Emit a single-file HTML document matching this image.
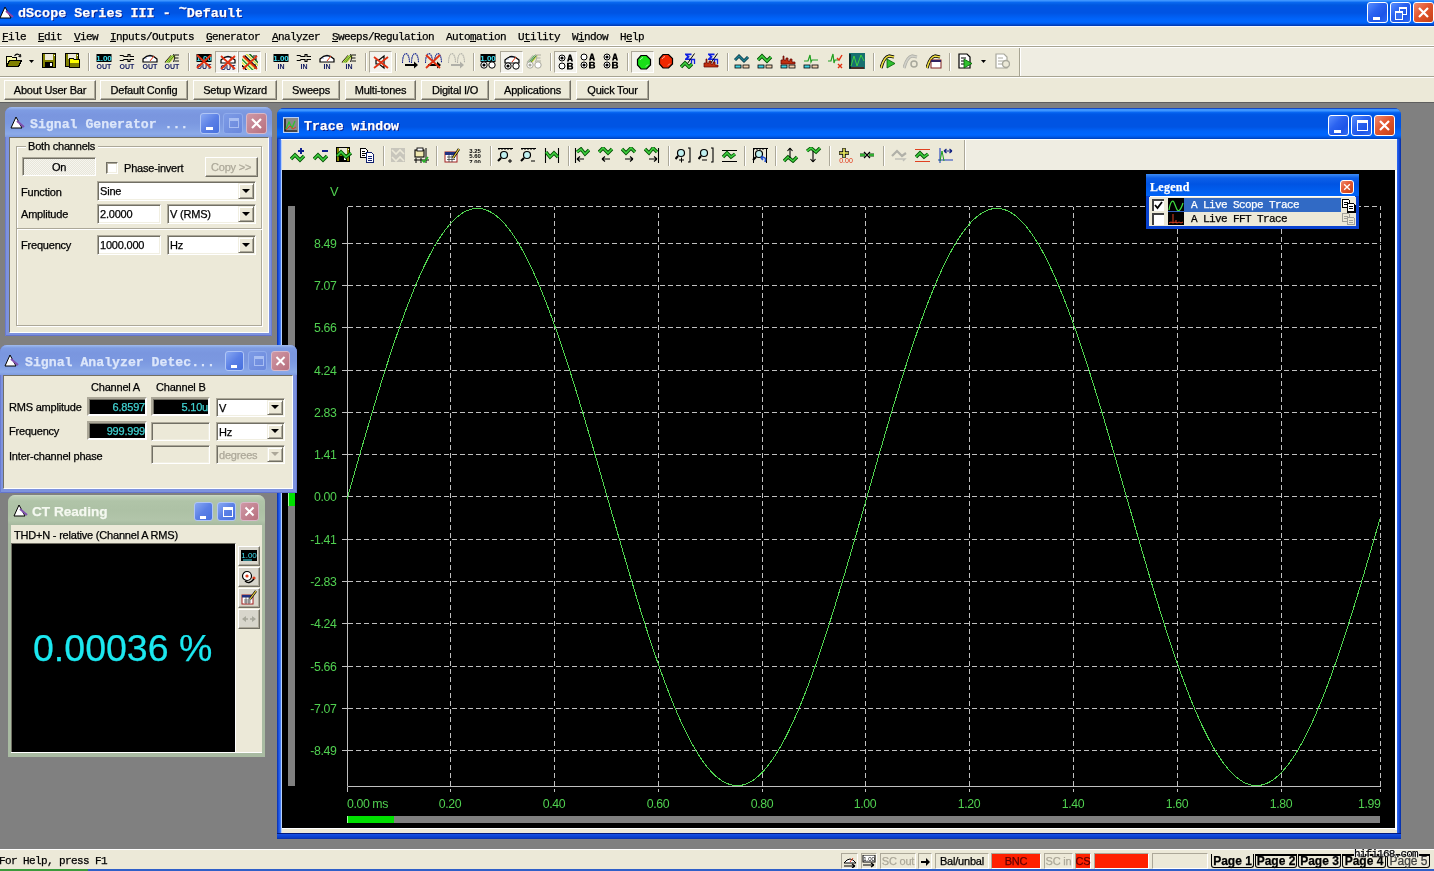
<!DOCTYPE html><html><head><meta charset="utf-8"><style>
*{box-sizing:border-box}
body{margin:0;width:1434px;height:871px;overflow:hidden;position:relative;background:#808080;font-family:"Liberation Sans",sans-serif;font-size:11px;color:#000}
.a{position:absolute}
.t{position:absolute;white-space:pre;line-height:12px;font-family:"Liberation Sans",sans-serif;font-size:11px;letter-spacing:-0.2px;-webkit-text-stroke:0.25px currentColor}
.m{font-family:"Liberation Mono",monospace}
.sunk{position:absolute;background:#fff;border-style:solid;border-width:1px;border-color:#ACA899 #FFFFFF #FFFFFF #ACA899;box-shadow:inset 1px 1px 0 #716F64, inset -1px -1px 0 #F1EFE2}
.rais{position:absolute;background:#ECE9D8;border-style:solid;border-width:1px;border-color:#F1EFE2 #716F64 #716F64 #F1EFE2;box-shadow:inset 1px 1px 0 #FFFFFF, inset -1px -1px 0 #ACA899}
.btn{position:absolute;background:#ECE9D8;border-style:solid;border-width:1px;border-color:#FFFFFF #716F64 #716F64 #FFFFFF;box-shadow:inset -1px -1px 0 #ACA899}

</style></head><body><div style="position:absolute;left:0;top:0;width:1434px;height:871px;overflow:hidden;will-change:transform">
<div class="a" style="left:0px;top:0px;width:1434px;height:26px;background:linear-gradient(#3D95FF 0px,#3D95FF 1px,#0A6BF2 2px,#0058E0 5px,#0054E3 8px,#0054E3 13px,#005AEB 15px,#0064FA 19px,#0066FF 22px,#0058E6 24px,#0040C0 25px,#003AB0 26px)"></div>
<svg class="a" style="left:-1px;top:6px" width="16" height="14" viewBox="0 0 16 14"><path d="M6 1 L1 12 L12 12 Z" fill="#fff" stroke="#000" stroke-width="1"/><path d="M7 5 L14 11" stroke="#9040A0" stroke-width="2"/></svg>
<div class="t" style="left:18px;top:7px;font-family:Liberation Mono,monospace;font-weight:bold;font-size:13.4px;letter-spacing:0;color:#fff;line-height:14px;text-shadow:1px 1px 0 #0A1883">dScope Series III - <span style="position:relative;top:-4px">~</span>Default</div>
<div class="a" style="left:1367px;top:2px;width:21px;height:21px;border:1px solid #FFFFFF;border-radius:3px;background:linear-gradient(135deg,#5A8FFF 0%,#2B63F0 40%,#1D55E8 70%,#2E6BF5 100%)"><div class="a" style="left:5px;top:14px;width:7px;height:3px;background:#fff"></div></div>
<div class="a" style="left:1390px;top:2px;width:21px;height:21px;border:1px solid #FFFFFF;border-radius:3px;background:linear-gradient(135deg,#5A8FFF 0%,#2B63F0 40%,#1D55E8 70%,#2E6BF5 100%)"><div class="a" style="left:8px;top:4px;width:8px;height:8px;border:1px solid #fff;border-top-width:2px"></div><div class="a" style="left:4px;top:8px;width:8px;height:9px;border:1px solid #fff;border-top-width:2px;background:#3A6FF0"></div></div>
<div class="a" style="left:1413px;top:2px;width:21px;height:21px;border:1px solid #FFFFFF;border-radius:3px;background:linear-gradient(135deg,#F08A70 0%,#E3562E 45%,#D34A20 75%,#C2401A 100%)"><svg class="a" style="left:0;top:0" width="19" height="19" viewBox="0 0 19 19"><path d="M5 5 L14 14 M14 5 L5 14" stroke="#fff" stroke-width="2.2"/></svg></div>
<div class="a" style="left:0px;top:26px;width:1434px;height:21px;background:#ECE9D8"></div>
<div class="a" style="left:0px;top:26px;width:1434px;height:1px;background:#F4F7FE"></div>
<div class="a" style="left:0px;top:45px;width:1434px;height:1px;background:#FFFFFF"></div>
<div class="a" style="left:0px;top:46px;width:1434px;height:1px;background:#A7A492"></div>
<div class="t" style="left:2px;top:31px;font-family:Liberation Mono,monospace;font-size:11px;letter-spacing:-0.6px;line-height:12px;color:#000">File  Edit  View  Inputs/Outputs  Generator  Analyzer  Sweeps/Regulation  Automation  Utility  Window  Help</div>
<div class="a" style="left:2px;top:41px;width:6px;height:1px;background:#000"></div>
<div class="a" style="left:38px;top:41px;width:6px;height:1px;background:#000"></div>
<div class="a" style="left:74px;top:41px;width:6px;height:1px;background:#000"></div>
<div class="a" style="left:110px;top:41px;width:6px;height:1px;background:#000"></div>
<div class="a" style="left:206px;top:41px;width:6px;height:1px;background:#000"></div>
<div class="a" style="left:272px;top:41px;width:6px;height:1px;background:#000"></div>
<div class="a" style="left:332px;top:41px;width:6px;height:1px;background:#000"></div>
<div class="a" style="left:470px;top:41px;width:6px;height:1px;background:#000"></div>
<div class="a" style="left:524px;top:41px;width:6px;height:1px;background:#000"></div>
<div class="a" style="left:578px;top:41px;width:6px;height:1px;background:#000"></div>
<div class="a" style="left:626px;top:41px;width:6px;height:1px;background:#000"></div>
<div class="a" style="left:0px;top:47px;width:1434px;height:30px;background:#ECE9D8"></div>
<div class="a" style="left:0px;top:47px;width:1434px;height:1px;background:#FFFFFF"></div>
<div class="a" style="left:1021px;top:48px;width:413px;height:28px;background:#EFEDE2"></div>
<div class="a" style="left:1019px;top:48px;width:1px;height:28px;background:#A7A492"></div>
<div class="a" style="left:1020px;top:48px;width:1px;height:28px;background:#FFFFFF"></div>
<div class="a" style="left:0px;top:76px;width:1434px;height:1px;background:#A7A492"></div>
<div class="a" style="left:0px;top:77px;width:1434px;height:1px;background:#FFFFFF"></div>
<svg class="a" style="left:6px;top:53px;opacity:1.0" width="16" height="16" viewBox="0 0 16 16"><g shape-rendering="crispEdges"><path d="M0.5 13.5 V3.5 H5.5 L6.5 4.5 H10.5 V7.5" fill="#F8F8A8" stroke="#000" stroke-width="1"/><path d="M0.5 13.5 L3.5 7.5 H15.5 L12.5 13.5 Z" fill="#808000" stroke="#000" stroke-width="1"/></g><path d="M8.5 3 Q11 -0.5 14 2.5" fill="none" stroke="#000" stroke-width="1.1"/><path d="M12.5 3.5 L14.8 3.8 L14.5 1.2" fill="none" stroke="#000" stroke-width="1"/></svg>
<svg class="a" style="left:29px;top:60px;opacity:1.0" width="5" height="3" viewBox="0 0 5 3"><polygon points="0,0 5,0 2.5,3" fill="#000"/></svg>
<svg class="a" style="left:42px;top:53px;opacity:1.0" width="16" height="16" viewBox="0 0 16 16"><g shape-rendering="crispEdges"><rect x="0.5" y="0.5" width="13" height="14" fill="#808000" stroke="#000" stroke-width="1"/><rect x="3" y="1" width="8" height="6" fill="#ECE9D8"/><rect x="3" y="9" width="8" height="6" fill="#000"/><rect x="8" y="10" width="2" height="3" fill="#fff"/><rect x="12" y="2" width="1" height="1" fill="#fff"/></g></svg>
<svg class="a" style="left:65px;top:53px;opacity:1.0" width="16" height="16" viewBox="0 0 16 16"><g shape-rendering="crispEdges"><rect x="0.5" y="0.5" width="13" height="13" fill="#808000" stroke="#000" stroke-width="1"/><rect x="3" y="1" width="8" height="5" fill="#ECE9D8"/><rect x="12" y="2" width="1" height="1" fill="#fff"/><path d="M4.5 14.5 V5.5 H8.5 L9.5 6.5 H14.5 V14.5 Z" fill="#808000" stroke="#000" stroke-width="1"/><rect x="5" y="7" width="9" height="3" fill="#FFFF00"/><rect x="5" y="6" width="3" height="1" fill="#FFFF00"/></g></svg>
<div class="a" style="left:88px;top:53px;width:1px;height:18px;background:#ACA899"></div>
<div class="a" style="left:89px;top:53px;width:1px;height:18px;background:#fff"></div>
<svg class="a" style="left:96px;top:53px;opacity:1.0" width="16" height="16" viewBox="0 0 16 16"><rect x="0.5" y="1" width="15" height="8" fill="#000"/><text x="8" y="8" font-family="Liberation Sans" font-weight="bold" font-size="8" text-anchor="middle" fill="#40E0F0">1.00</text><text x="8" y="16" font-family="Liberation Sans" font-weight="bold" font-size="7" text-anchor="middle" fill="#101860">OUT</text></svg>
<svg class="a" style="left:119px;top:53px;opacity:1.0" width="16" height="16" viewBox="0 0 16 16"><path d="M1 2.5 H4 L5 3.5 H9 V1.5 H11 V3.5 H15 M1 7.5 H4 L5 6.5 H9 V8.5 H11 V6.5 H15 M1 2.5 V3 M1 7.5 V7" stroke="#000" stroke-width="1.1" fill="none"/><text x="8" y="16" font-family="Liberation Sans" font-weight="bold" font-size="7" text-anchor="middle" fill="#101860">OUT</text></svg>
<svg class="a" style="left:142px;top:53px;opacity:1.0" width="16" height="16" viewBox="0 0 16 16"><path d="M1 9 V6 Q8 -1 15 6 V9 Z" fill="#fff" stroke="#000" stroke-width="1.2"/><path d="M8 8 L12 3" stroke="#E03010" stroke-width="1"/><circle cx="4" cy="5" r="0.6" fill="#2040A0"/><circle cx="8" cy="3" r="0.6" fill="#2040A0"/><text x="8" y="16" font-family="Liberation Sans" font-weight="bold" font-size="7" text-anchor="middle" fill="#101860">OUT</text></svg>
<svg class="a" style="left:164px;top:53px;opacity:1.0" width="16" height="16" viewBox="0 0 16 16"><path d="M1.0 9.5 L7.0 2.5" stroke="#000" stroke-width="1.1"/><path d="M1.9 9.5 L7.9 2.5" stroke="#F0F040" stroke-width="1.1"/><path d="M2.8 9.5 L8.8 2.5" stroke="#20A020" stroke-width="1.1"/><path d="M3.7 9.5 L9.7 2.5" stroke="#F0F040" stroke-width="1.1"/><path d="M4.6 9.5 L10.6 2.5" stroke="#106010" stroke-width="1.1"/><path d="M5.5 9.5 L11.5 2.5" stroke="#D0E040" stroke-width="1.1"/><path d="M10.5 2 H15 M11 5 H14.5 M10.5 8 H15 M9.5 1 Q12 5 9.5 9" stroke="#000" stroke-width="0.9" fill="none"/><text x="8" y="16" font-family="Liberation Sans" font-weight="bold" font-size="7" text-anchor="middle" fill="#101860">OUT</text></svg>
<div class="a" style="left:188px;top:53px;width:1px;height:18px;background:#ACA899"></div>
<div class="a" style="left:189px;top:53px;width:1px;height:18px;background:#fff"></div>
<svg class="a" style="left:196px;top:53px;opacity:1.0" width="16" height="16" viewBox="0 0 16 16"><rect x="0.5" y="1" width="15" height="8" fill="#000"/><text x="8" y="8" font-family="Liberation Sans" font-weight="bold" font-size="8" text-anchor="middle" fill="#40E0F0">1.00</text><text x="8" y="16" font-family="Liberation Sans" font-weight="bold" font-size="7" text-anchor="middle" fill="#101860">OUT</text><path d="M1 2 L15 15 M15 2 L1 15" stroke="#E03010" stroke-width="1.8"/></svg>
<div class="a" style="left:215px;top:51px;width:23px;height:22px;background:#F3F2EC;border-style:solid;border-width:1px;border-color:#ACA899 #fff #fff #ACA899"></div>
<svg class="a" style="left:220px;top:54px;opacity:1.0" width="16" height="16" viewBox="0 0 16 16"><path d="M1 9 V6 Q8 -1 15 6 V9 Z" fill="#fff" stroke="#000" stroke-width="1.2"/><path d="M8 8 L12 3" stroke="#E03010" stroke-width="1"/><circle cx="4" cy="5" r="0.6" fill="#2040A0"/><circle cx="8" cy="3" r="0.6" fill="#2040A0"/><text x="8" y="16" font-family="Liberation Sans" font-weight="bold" font-size="7" text-anchor="middle" fill="#101860">OUT</text><path d="M1 2 L15 15 M15 2 L1 15" stroke="#E03010" stroke-width="1.8"/></svg>
<div class="a" style="left:238px;top:51px;width:23px;height:22px;background:#F3F2EC;border-style:solid;border-width:1px;border-color:#ACA899 #fff #fff #ACA899"></div>
<svg class="a" style="left:242px;top:54px;opacity:1.0" width="16" height="16" viewBox="0 0 16 16"><path d="M-3.8000000000000007 7.800000000000001 L8.2 19.8" stroke="#000" stroke-width="1.4"/><path d="M-2.2 6.2 L9.8 18.2" stroke="#F0F040" stroke-width="1.4"/><path d="M-0.6000000000000001 4.6 L11.4 16.6" stroke="#20A020" stroke-width="1.4"/><path d="M1.0 3.0 L13.0 15.0" stroke="#F0F040" stroke-width="1.4"/><path d="M2.6 1.4 L14.6 13.4" stroke="#000" stroke-width="1.4"/><path d="M4.2 -0.20000000000000018 L16.2 11.8" stroke="#D0E040" stroke-width="1.4"/><path d="M5.800000000000001 -1.8000000000000007 L17.8 10.2" stroke="#106010" stroke-width="1.4"/><path d="M11 2 H15 M12 5 H15 M11 11 H14 M12 14 H15" stroke="#000" stroke-width="1"/><path d="M1 2 L15 15 M15 2 L1 15" stroke="#E03010" stroke-width="1.8"/></svg>
<div class="a" style="left:265px;top:53px;width:1px;height:18px;background:#ACA899"></div>
<div class="a" style="left:266px;top:53px;width:1px;height:18px;background:#fff"></div>
<svg class="a" style="left:273px;top:53px;opacity:1.0" width="16" height="16" viewBox="0 0 16 16"><rect x="0.5" y="1" width="15" height="8" fill="#000"/><text x="8" y="8" font-family="Liberation Sans" font-weight="bold" font-size="8" text-anchor="middle" fill="#40E0F0">1.00</text><text x="8" y="16" font-family="Liberation Sans" font-weight="bold" font-size="7" text-anchor="middle" fill="#101860">IN</text></svg>
<svg class="a" style="left:296px;top:53px;opacity:1.0" width="16" height="16" viewBox="0 0 16 16"><path d="M1 2.5 H4 L5 3.5 H9 V1.5 H11 V3.5 H15 M1 7.5 H4 L5 6.5 H9 V8.5 H11 V6.5 H15 M1 2.5 V3 M1 7.5 V7" stroke="#000" stroke-width="1.1" fill="none"/><text x="8" y="16" font-family="Liberation Sans" font-weight="bold" font-size="7" text-anchor="middle" fill="#101860">IN</text></svg>
<svg class="a" style="left:319px;top:53px;opacity:1.0" width="16" height="16" viewBox="0 0 16 16"><path d="M1 9 V6 Q8 -1 15 6 V9 Z" fill="#fff" stroke="#000" stroke-width="1.2"/><path d="M8 8 L12 3" stroke="#E03010" stroke-width="1"/><circle cx="4" cy="5" r="0.6" fill="#2040A0"/><circle cx="8" cy="3" r="0.6" fill="#2040A0"/><text x="8" y="16" font-family="Liberation Sans" font-weight="bold" font-size="7" text-anchor="middle" fill="#101860">IN</text></svg>
<svg class="a" style="left:341px;top:53px;opacity:1.0" width="16" height="16" viewBox="0 0 16 16"><path d="M1.0 9.5 L7.0 2.5" stroke="#000" stroke-width="1.1"/><path d="M1.9 9.5 L7.9 2.5" stroke="#F0F040" stroke-width="1.1"/><path d="M2.8 9.5 L8.8 2.5" stroke="#20A020" stroke-width="1.1"/><path d="M3.7 9.5 L9.7 2.5" stroke="#F0F040" stroke-width="1.1"/><path d="M4.6 9.5 L10.6 2.5" stroke="#106010" stroke-width="1.1"/><path d="M5.5 9.5 L11.5 2.5" stroke="#D0E040" stroke-width="1.1"/><path d="M10.5 2 H15 M11 5 H14.5 M10.5 8 H15 M9.5 1 Q12 5 9.5 9" stroke="#000" stroke-width="0.9" fill="none"/><text x="8" y="16" font-family="Liberation Sans" font-weight="bold" font-size="7" text-anchor="middle" fill="#101860">IN</text></svg>
<div class="a" style="left:365px;top:53px;width:1px;height:18px;background:#ACA899"></div>
<div class="a" style="left:366px;top:53px;width:1px;height:18px;background:#fff"></div>
<div class="a" style="left:369px;top:51px;width:23px;height:22px;background:#F3F2EC;border-style:solid;border-width:1px;border-color:#ACA899 #fff #fff #ACA899"></div>
<svg class="a" style="left:373px;top:54px;opacity:1.0" width="16" height="16" viewBox="0 0 16 16"><path d="M3 6 H6 L11 2 V14 L6 10 H3 Z" fill="none" stroke="#000" stroke-width="1.2"/><path d="M1 3 L15 14 M15 3 L1 14" stroke="#E03010" stroke-width="1.8"/></svg>
<div class="a" style="left:395px;top:53px;width:1px;height:18px;background:#ACA899"></div>
<div class="a" style="left:396px;top:53px;width:1px;height:18px;background:#fff"></div>
<svg class="a" style="left:402px;top:53px;opacity:1.0" width="17" height="16" viewBox="0 0 17 16"><path d="M0.5 10 C0.5 -2.5 7.5 -2.5 7.5 10 M9.5 10 C9.5 -2.5 16.5 -2.5 16.5 10" fill="none" stroke="#102090" stroke-width="1.1" stroke-dasharray="1.5 0.6"/><path d="M3 12 H13" stroke="#000" stroke-width="2"/><polygon points="12,8.5 16,12 12,15.5" fill="#000"/></svg>
<svg class="a" style="left:425px;top:53px;opacity:1.0" width="17" height="16" viewBox="0 0 17 16"><path d="M0.5 10 C0.5 -2.5 7.5 -2.5 7.5 10 M9.5 10 C9.5 -2.5 16.5 -2.5 16.5 10" fill="none" stroke="#102090" stroke-width="1.1" stroke-dasharray="1.5 0.6"/><path d="M3 12 H13" stroke="#000" stroke-width="2"/><polygon points="12,8.5 16,12 12,15.5" fill="#000"/><path d="M1 2 L15 15 M15 2 L1 15" stroke="#E03010" stroke-width="1.8"/></svg>
<svg class="a" style="left:448px;top:53px;opacity:1.0" width="17" height="16" viewBox="0 0 17 16"><path d="M0.5 10 C0.5 -2.5 7.5 -2.5 7.5 10 M9.5 10 C9.5 -2.5 16.5 -2.5 16.5 10" fill="none" stroke="#B0B0A8" stroke-width="1.1" stroke-dasharray="1.5 0.6"/><path d="M3 12 H13" stroke="#B0B0A8" stroke-width="2"/><polygon points="12,8.5 16,12 12,15.5" fill="#B0B0A8"/></svg>
<div class="a" style="left:473px;top:53px;width:1px;height:18px;background:#ACA899"></div>
<div class="a" style="left:474px;top:53px;width:1px;height:18px;background:#fff"></div>
<svg class="a" style="left:480px;top:53px;opacity:1.0" width="16" height="16" viewBox="0 0 16 16"><rect x="0.5" y="1" width="15" height="8" fill="#000"/><text x="8" y="8" font-family="Liberation Sans" font-weight="bold" font-size="8" text-anchor="middle" fill="#40E0F0">1.00</text><circle cx="4" cy="12" r="3.2" fill="#fff" stroke="#000" stroke-width="1"/><circle cx="4" cy="12" r="1.6" fill="#000"/><circle cx="12" cy="12" r="3.2" fill="#fff" stroke="#000" stroke-width="1"/></svg>
<div class="a" style="left:500px;top:51px;width:23px;height:22px;background:#F3F2EC;border-style:solid;border-width:1px;border-color:#ACA899 #fff #fff #ACA899"></div>
<svg class="a" style="left:504px;top:54px;opacity:1.0" width="16" height="16" viewBox="0 0 16 16"><path d="M1 9 V6 Q8 -1 15 6 V9 Z" fill="#fff" stroke="#000" stroke-width="1.2"/><path d="M8 8 L12 3" stroke="#E03010" stroke-width="1"/><circle cx="4" cy="5" r="0.6" fill="#2040A0"/><circle cx="8" cy="3" r="0.6" fill="#2040A0"/><circle cx="4" cy="12" r="3.2" fill="#fff" stroke="#000" stroke-width="1"/><circle cx="4" cy="12" r="1.6" fill="#000"/><circle cx="12" cy="12" r="3.2" fill="#fff" stroke="#000" stroke-width="1"/></svg>
<svg class="a" style="left:526px;top:53px;opacity:1.0" width="16" height="16" viewBox="0 0 16 16"><path d="M1.0 9.5 L7.0 2.5" stroke="#A8A89C" stroke-width="1.1"/><path d="M1.9 9.5 L7.9 2.5" stroke="#D0D0C8" stroke-width="1.1"/><path d="M2.8 9.5 L8.8 2.5" stroke="#20A020" stroke-width="1.1"/><path d="M3.7 9.5 L9.7 2.5" stroke="#D0D0C8" stroke-width="1.1"/><path d="M4.6 9.5 L10.6 2.5" stroke="#106010" stroke-width="1.1"/><path d="M5.5 9.5 L11.5 2.5" stroke="#D0E040" stroke-width="1.1"/><path d="M10.5 2 H15 M11 5 H14.5 M10.5 8 H15 M9.5 1 Q12 5 9.5 9" stroke="#A8A89C" stroke-width="0.9" fill="none"/><circle cx="4" cy="12" r="3.2" fill="#fff" stroke="#A8A89C" stroke-width="1"/><circle cx="4" cy="12" r="1.6" fill="#A8A89C"/><circle cx="12" cy="12" r="3.2" fill="#fff" stroke="#A8A89C" stroke-width="1"/></svg>
<div class="a" style="left:550px;top:53px;width:1px;height:18px;background:#ACA899"></div>
<div class="a" style="left:551px;top:53px;width:1px;height:18px;background:#fff"></div>
<div class="a" style="left:554px;top:51px;width:23px;height:22px;background:#F3F2EC;border-style:solid;border-width:1px;border-color:#ACA899 #fff #fff #ACA899"></div>
<svg class="a" style="left:558px;top:54px;opacity:1.0" width="16" height="16" viewBox="0 0 16 16"><circle cx="4" cy="4" r="3" fill="#fff" stroke="#000" stroke-width="1"/><circle cx="4" cy="4" r="1.6" fill="#000"/><circle cx="4" cy="12" r="3" fill="#fff" stroke="#000" stroke-width="1"/><path fill-rule="evenodd" d="M9 7.5 L11 0.5 H13 L15 7.5 H13.2 L12.8 6 H11.2 L10.8 7.5 Z M11.5 4.6 H12.5 L12 2.6 Z" fill="#000"/><path fill-rule="evenodd" d="M9 8.8 H13.3 Q15 8.8 15 10.6 Q15 11.6 14.1 12 Q15.2 12.4 15.2 13.7 Q15.2 15.5 13.4 15.5 H9 Z M10.8 10.1 V11.5 H12.8 Q13.3 11.5 13.3 10.8 Q13.3 10.1 12.8 10.1 Z M10.8 12.7 V14.2 H13 Q13.5 14.2 13.5 13.45 Q13.5 12.7 13 12.7 Z" fill="#000"/></svg>
<svg class="a" style="left:580px;top:53px;opacity:1.0" width="16" height="16" viewBox="0 0 16 16"><circle cx="4" cy="4" r="3" fill="#fff" stroke="#000" stroke-width="1"/><circle cx="4" cy="12" r="3" fill="#fff" stroke="#000" stroke-width="1"/><circle cx="4" cy="12" r="1.6" fill="#000"/><path fill-rule="evenodd" d="M9 7.5 L11 0.5 H13 L15 7.5 H13.2 L12.8 6 H11.2 L10.8 7.5 Z M11.5 4.6 H12.5 L12 2.6 Z" fill="#000"/><path fill-rule="evenodd" d="M9 8.8 H13.3 Q15 8.8 15 10.6 Q15 11.6 14.1 12 Q15.2 12.4 15.2 13.7 Q15.2 15.5 13.4 15.5 H9 Z M10.8 10.1 V11.5 H12.8 Q13.3 11.5 13.3 10.8 Q13.3 10.1 12.8 10.1 Z M10.8 12.7 V14.2 H13 Q13.5 14.2 13.5 13.45 Q13.5 12.7 13 12.7 Z" fill="#000"/></svg>
<svg class="a" style="left:603px;top:53px;opacity:1.0" width="16" height="16" viewBox="0 0 16 16"><circle cx="4" cy="4" r="3" fill="#fff" stroke="#000" stroke-width="1"/><circle cx="4" cy="4" r="1.6" fill="#000"/><circle cx="4" cy="12" r="3" fill="#fff" stroke="#000" stroke-width="1"/><circle cx="4" cy="12" r="1.6" fill="#000"/><path fill-rule="evenodd" d="M9 7.5 L11 0.5 H13 L15 7.5 H13.2 L12.8 6 H11.2 L10.8 7.5 Z M11.5 4.6 H12.5 L12 2.6 Z" fill="#000"/><path fill-rule="evenodd" d="M9 8.8 H13.3 Q15 8.8 15 10.6 Q15 11.6 14.1 12 Q15.2 12.4 15.2 13.7 Q15.2 15.5 13.4 15.5 H9 Z M10.8 10.1 V11.5 H12.8 Q13.3 11.5 13.3 10.8 Q13.3 10.1 12.8 10.1 Z M10.8 12.7 V14.2 H13 Q13.5 14.2 13.5 13.45 Q13.5 12.7 13 12.7 Z" fill="#000"/></svg>
<div class="a" style="left:627px;top:53px;width:1px;height:18px;background:#ACA899"></div>
<div class="a" style="left:628px;top:53px;width:1px;height:18px;background:#fff"></div>
<div class="a" style="left:631px;top:51px;width:23px;height:22px;background:#F3F2EC;border-style:solid;border-width:1px;border-color:#ACA899 #fff #fff #ACA899"></div>
<svg class="a" style="left:636px;top:54px;opacity:1.0" width="16" height="16" viewBox="0 0 16 16"><polygon points="5,1.5 10.5,1.5 14.5,5.5 14.5,11 10.5,15 5,15 1.5,11 1.5,5.5" fill="#18E018" stroke="#000" stroke-width="1.2"/><path d="M4 6 Q5 4 7 3.5 M10 12.5 L12 10.5" stroke="#fff" stroke-width="0.8" fill="none" opacity="0.8"/></svg>
<svg class="a" style="left:658px;top:53px;opacity:1.0" width="16" height="16" viewBox="0 0 16 16"><polygon points="5,1.5 10.5,1.5 14.5,5.5 14.5,11 10.5,15 5,15 1.5,11 1.5,5.5" fill="#F02800" stroke="#000" stroke-width="1.2"/><path d="M4 6 Q5 4 7 3.5 M10 12.5 L12 10.5" stroke="#fff" stroke-width="0.8" fill="none" opacity="0.8"/></svg>
<svg class="a" style="left:680px;top:53px;opacity:1.0" width="16" height="16" viewBox="0 0 16 16"><path d="M5 0.5 H11.5 V2.2 H8 L9.8 3.8 L8 5.4 H11.5 V7 H5 V5.8 L7.2 3.8 L5 1.8 Z" fill="#1020E0"/><path d="M7.5 10.5 L14.5 0.5" stroke="#000" stroke-width="1"/><path d="M11.5 11 V6.5 H14.5 V11" fill="none" stroke="#1020E0" stroke-width="1.3"/><polyline points="1,12 5,8 9,12 12,9" transform="translate(0,2)" fill="none" stroke="#005000" stroke-width="3.4" stroke-linejoin="miter"/><polyline points="1,12 5,8 9,12 12,9" transform="translate(0,2)" fill="none" stroke="#40D040" stroke-width="1.6"/></svg>
<svg class="a" style="left:703px;top:53px;opacity:1.0" width="16" height="16" viewBox="0 0 16 16"><path d="M5 0.5 H11.5 V2.2 H8 L9.8 3.8 L8 5.4 H11.5 V7 H5 V5.8 L7.2 3.8 L5 1.8 Z" fill="#1020E0"/><path d="M7.5 10.5 L14.5 0.5" stroke="#000" stroke-width="1"/><path d="M11.5 11 V6.5 H14.5 V11" fill="none" stroke="#1020E0" stroke-width="1.3"/><path d="M1 14 V10 H3 V6 H4 V10 H6 V8 H8 V11 H10 V9 H12 V12 H15 V14 Z" fill="#C03010" stroke="#600000" stroke-width="0.7"/></svg>
<div class="a" style="left:727px;top:53px;width:1px;height:18px;background:#ACA899"></div>
<div class="a" style="left:728px;top:53px;width:1px;height:18px;background:#fff"></div>
<svg class="a" style="left:734px;top:53px;opacity:1.0" width="16" height="16" viewBox="0 0 16 16"><polyline points="1,7 5,3 10,8 14,4" fill="none" stroke="#003040" stroke-width="3"/><polyline points="1,7 5,3 10,8 14,4" fill="none" stroke="#208090" stroke-width="1.5"/><rect x="1" y="12" width="6" height="3" fill="#40D0E0" stroke="#000" stroke-width="0.8"/><rect x="9" y="12" width="6" height="3" fill="#F0D0B0" stroke="#000" stroke-width="0.8"/></svg>
<svg class="a" style="left:757px;top:53px;opacity:1.0" width="16" height="16" viewBox="0 0 16 16"><polyline points="1,11 5,7 10,12 14,8" transform="translate(0,-4)" fill="none" stroke="#005000" stroke-width="3.4" stroke-linejoin="miter"/><polyline points="1,11 5,7 10,12 14,8" transform="translate(0,-4)" fill="none" stroke="#40D040" stroke-width="1.6"/><rect x="1" y="12" width="6" height="3" fill="#40D0E0" stroke="#000" stroke-width="0.8"/><rect x="9" y="12" width="6" height="3" fill="#F0D0B0" stroke="#000" stroke-width="0.8"/></svg>
<svg class="a" style="left:780px;top:53px;opacity:1.0" width="16" height="16" viewBox="0 0 16 16"><path d="M1 11 V7 H3 V3 H4 V7 H6 V5 H8 V8 H10 V6 H12 V9 H15 V11 Z" fill="#C03010" stroke="#600000" stroke-width="0.7"/><rect x="1" y="12" width="6" height="3" fill="#40D0E0" stroke="#000" stroke-width="0.8"/><rect x="9" y="12" width="6" height="3" fill="#F0D0B0" stroke="#000" stroke-width="0.8"/></svg>
<svg class="a" style="left:803px;top:53px;opacity:1.0" width="16" height="16" viewBox="0 0 16 16"><path d="M1 8 H5 L6 5 L7 2 L8 9 L9 7 H15" fill="none" stroke="#20A020" stroke-width="1.2"/><rect x="1" y="12" width="6" height="3" fill="#40D0E0" stroke="#000" stroke-width="0.8"/><rect x="9" y="12" width="6" height="3" fill="#F0D0B0" stroke="#000" stroke-width="0.8"/></svg>
<svg class="a" style="left:827px;top:53px;opacity:1.0" width="16" height="16" viewBox="0 0 16 16"><path d="M1 8 H4 L5 4 L6 1 L7 10 L8 7 H11" fill="none" stroke="#20A020" stroke-width="1.2"/><path d="M10 5 L12 7 L15 2" fill="none" stroke="#E03010" stroke-width="1.4"/><path d="M11 11 L15 15 M15 11 L11 15" stroke="#E03010" stroke-width="1.4"/></svg>
<svg class="a" style="left:849px;top:53px;opacity:1.0" width="16" height="16" viewBox="0 0 16 16"><rect x="0" y="0" width="16" height="16" fill="#187070"/><path d="M1 1 V15 H15" stroke="#000" fill="none" stroke-width="1.2"/><path d="M2 13 L5 3 L8 13 L12 2 L15 8" fill="none" stroke="#40D040" stroke-width="1"/><path d="M2 15 H15" stroke="#802010" stroke-width="1"/></svg>
<div class="a" style="left:873px;top:53px;width:1px;height:18px;background:#ACA899"></div>
<div class="a" style="left:874px;top:53px;width:1px;height:18px;background:#fff"></div>
<svg class="a" style="left:880px;top:53px;opacity:1.0" width="16" height="16" viewBox="0 0 16 16"><path d="M1 15 Q4 4 9 3 L14 4" fill="none" stroke="#000" stroke-width="3.2"/><path d="M1 15 Q4 4 9 3 L14 4" fill="none" stroke="#F0E040" stroke-width="1.6"/><polygon points="7,6 15,10.5 7,15" fill="#30C030" stroke="#006000" stroke-width="0.8"/></svg>
<svg class="a" style="left:903px;top:53px;opacity:1.0" width="16" height="16" viewBox="0 0 16 16"><path d="M1 15 Q4 4 9 3 L14 4" fill="none" stroke="#B0B0A8" stroke-width="3.2"/><path d="M1 15 Q4 4 9 3 L14 4" fill="none" stroke="#D0D0C8" stroke-width="1.6"/><circle cx="11" cy="11" r="3" fill="none" stroke="#A8A89C" stroke-width="1.5"/></svg>
<svg class="a" style="left:926px;top:53px;opacity:1.0" width="16" height="16" viewBox="0 0 16 16"><path d="M1 15 Q4 4 9 3 L14 4" fill="none" stroke="#000" stroke-width="3.2"/><path d="M1 15 Q4 4 9 3 L14 4" fill="none" stroke="#F0E040" stroke-width="1.6"/><rect x="5" y="7" width="10" height="8" fill="#fff" stroke="#802020" stroke-width="1"/><rect x="5" y="7" width="10" height="2" fill="#302060"/></svg>
<div class="a" style="left:949px;top:53px;width:1px;height:18px;background:#ACA899"></div>
<div class="a" style="left:950px;top:53px;width:1px;height:18px;background:#fff"></div>
<svg class="a" style="left:957px;top:53px;opacity:1.0" width="16" height="16" viewBox="0 0 16 16"><path d="M2 1 H10 L13 4 V15 H2 Z" fill="#fff" stroke="#000" stroke-width="1.2"/><path d="M4 5 H9 M4 8 H10 M4 11 H9" stroke="#000" stroke-width="1"/><polygon points="7,6 15,10.5 7,15" fill="#30C030" stroke="#006000" stroke-width="0.8"/></svg>
<svg class="a" style="left:981px;top:60px;opacity:1.0" width="5" height="3" viewBox="0 0 5 3"><polygon points="0,0 5,0 2.5,3" fill="#000"/></svg>
<svg class="a" style="left:994px;top:53px;opacity:1.0" width="16" height="16" viewBox="0 0 16 16"><path d="M2 1 H10 L13 4 V15 H2 Z" fill="#fff" stroke="#A8A89C" stroke-width="1.2"/><path d="M4 5 H9 M4 8 H10 M4 11 H9" stroke="#A8A89C" stroke-width="1"/><circle cx="12" cy="11" r="3.5" fill="#ECE9D8" stroke="#A8A89C" stroke-width="1.4"/></svg>
<div class="a" style="left:0px;top:78px;width:1434px;height:25px;background:#ECE9D8"></div>
<div class="btn" style="left:4px;top:80px;width:92px;height:20px"><div class="t" style="left:0;top:3px;width:90px;text-align:center">About User Bar</div></div>
<div class="btn" style="left:100px;top:80px;width:88px;height:20px"><div class="t" style="left:0;top:3px;width:86px;text-align:center">Default Config</div></div>
<div class="btn" style="left:193px;top:80px;width:84px;height:20px"><div class="t" style="left:0;top:3px;width:82px;text-align:center">Setup Wizard</div></div>
<div class="btn" style="left:282px;top:80px;width:58px;height:20px"><div class="t" style="left:0;top:3px;width:56px;text-align:center">Sweeps</div></div>
<div class="btn" style="left:345px;top:80px;width:71px;height:20px"><div class="t" style="left:0;top:3px;width:69px;text-align:center">Multi-tones</div></div>
<div class="btn" style="left:421px;top:80px;width:68px;height:20px"><div class="t" style="left:0;top:3px;width:66px;text-align:center">Digital I/O</div></div>
<div class="btn" style="left:494px;top:80px;width:77px;height:20px"><div class="t" style="left:0;top:3px;width:75px;text-align:center">Applications</div></div>
<div class="btn" style="left:576px;top:80px;width:73px;height:20px"><div class="t" style="left:0;top:3px;width:71px;text-align:center">Quick Tour</div></div>
<div class="a" style="left:0px;top:102px;width:1434px;height:1px;background:#5E5E5E"></div>
<div class="a" style="left:277px;top:108px;width:1124px;height:731px;background:#0842D0;border-radius:7px 7px 0 0;"></div>
<div class="a" style="left:277px;top:108px;width:1124px;height:31px;background:linear-gradient(#1848C0 0px,#1848C0 1px,#3D95FF 1px,#3D95FF 3px,#0A6AF5 4px,#0058E6 6px,#0054E3 9px,#0054E3 19px,#0062F8 23px,#0066FF 27px,#0058E8 29px,#0040B8 31px);border-radius:7px 7px 0 0"></div>
<svg class="a" style="left:283px;top:117px" width="16" height="16" viewBox="0 0 16 16"><rect x="0.5" y="0.5" width="15" height="15" fill="#8A8A8A" stroke="#B8D0F8"/><path d="M2 2 V14 H14" stroke="#000" fill="none" stroke-width="1.2"/><path d="M3 12 L6 5 L9 11 L12 4" stroke="#30C030" fill="none" stroke-width="1.3"/><path d="M3 13 L7 9 L10 12 L13 10" stroke="#E04020" fill="none" stroke-width="1"/></svg>
<div class="t" style="left:304px;top:120px;font-family:Liberation Mono,monospace;font-weight:bold;font-size:13.2px;letter-spacing:0;color:#fff;line-height:14px;text-shadow:1px 1px 0 #0A1883">Trace window</div>
<div class="a" style="left:1328px;top:115px;width:21px;height:21px;border:1px solid #FFFFFF;border-radius:3px;background:linear-gradient(135deg,#5A8FFF 0%,#2B63F0 40%,#1D55E8 70%,#2E6BF5 100%)"><div class="a" style="left:5px;top:14px;width:7px;height:3px;background:#fff"></div></div>
<div class="a" style="left:1351px;top:115px;width:21px;height:21px;border:1px solid #FFFFFF;border-radius:3px;background:linear-gradient(135deg,#5A8FFF 0%,#2B63F0 40%,#1D55E8 70%,#2E6BF5 100%)"><div class="a" style="left:5px;top:4px;width:11px;height:11px;border:1px solid #fff;border-top-width:3px"></div></div>
<div class="a" style="left:1374px;top:115px;width:21px;height:21px;border:1px solid #FFFFFF;border-radius:3px;background:linear-gradient(135deg,#F08A70 0%,#E3562E 45%,#D34A20 75%,#C2401A 100%)"><svg class="a" style="left:0;top:0" width="19" height="19" viewBox="0 0 19 19"><path d="M5 5 L14 14 M14 5 L5 14" stroke="#fff" stroke-width="2.2"/></svg></div>
<div class="a" style="left:277px;top:139px;width:4px;height:700px;background:linear-gradient(90deg,#0A2EA8,#1A50E0 40%,#2C68F0 75%,#5C90F8)"></div>
<div class="a" style="left:1397px;top:139px;width:4px;height:700px;background:linear-gradient(90deg,#2C68F0,#1A50E0 40%,#0A3BC0 75%,#0A2EA0)"></div>
<div class="a" style="left:277px;top:833px;width:1124px;height:6px;background:linear-gradient(#001A80 0,#001A80 1px,#1A50E0 1px,#0A45D8 3px,#0A3BC0 5px,#0A2EA0 6px)"></div>
<div class="a" style="left:281px;top:139px;width:1116px;height:694px;background:#ECE9D8"></div>
<div class="a" style="left:281px;top:139px;width:1px;height:694px;background:#B8D0F8"></div>
<div class="a" style="left:281px;top:139px;width:1116px;height:1px;background:#fff"></div>
<div class="a" style="left:966px;top:140px;width:431px;height:30px;background:#EFEDE2"></div>
<div class="a" style="left:964px;top:140px;width:1px;height:30px;background:#ACA899"></div>
<div class="a" style="left:965px;top:140px;width:1px;height:30px;background:#fff"></div>
<div class="a" style="left:282px;top:170px;width:1113px;height:658px;background:#000"></div>
<div class="a" style="left:1395px;top:170px;width:2px;height:660px;background:#fff"></div>
<div class="a" style="left:282px;top:828px;width:1115px;height:1px;background:#fff"></div>
<svg class="a" style="left:0;top:0" width="1434" height="871"><path d="M348 206.5 H1381" stroke="#C0C0C0" stroke-dasharray="5 3"/><path d="M348 243.5 H1381" stroke="#C0C0C0" stroke-dasharray="5 3"/><path d="M342 243.5 H347" stroke="#C0C0C0"/><path d="M348 285.5 H1381" stroke="#C0C0C0" stroke-dasharray="5 3"/><path d="M342 285.5 H347" stroke="#C0C0C0"/><path d="M348 327.5 H1381" stroke="#C0C0C0" stroke-dasharray="5 3"/><path d="M342 327.5 H347" stroke="#C0C0C0"/><path d="M348 370.5 H1381" stroke="#C0C0C0" stroke-dasharray="5 3"/><path d="M342 370.5 H347" stroke="#C0C0C0"/><path d="M348 412.5 H1381" stroke="#C0C0C0" stroke-dasharray="5 3"/><path d="M342 412.5 H347" stroke="#C0C0C0"/><path d="M348 454.5 H1381" stroke="#C0C0C0" stroke-dasharray="5 3"/><path d="M342 454.5 H347" stroke="#C0C0C0"/><path d="M348 496.5 H1381" stroke="#C0C0C0" stroke-dasharray="5 3"/><path d="M342 496.5 H347" stroke="#C0C0C0"/><path d="M348 539.5 H1381" stroke="#C0C0C0" stroke-dasharray="5 3"/><path d="M342 539.5 H347" stroke="#C0C0C0"/><path d="M348 581.5 H1381" stroke="#C0C0C0" stroke-dasharray="5 3"/><path d="M342 581.5 H347" stroke="#C0C0C0"/><path d="M348 623.5 H1381" stroke="#C0C0C0" stroke-dasharray="5 3"/><path d="M342 623.5 H347" stroke="#C0C0C0"/><path d="M348 666.5 H1381" stroke="#C0C0C0" stroke-dasharray="5 3"/><path d="M342 666.5 H347" stroke="#C0C0C0"/><path d="M348 708.5 H1381" stroke="#C0C0C0" stroke-dasharray="5 3"/><path d="M342 708.5 H347" stroke="#C0C0C0"/><path d="M348 750.5 H1381" stroke="#C0C0C0" stroke-dasharray="5 3"/><path d="M342 750.5 H347" stroke="#C0C0C0"/><path d="M450.5 207 V792" stroke="#C0C0C0" stroke-dasharray="5 3" stroke-dashoffset="2"/><path d="M554.5 207 V792" stroke="#C0C0C0" stroke-dasharray="5 3" stroke-dashoffset="2"/><path d="M658.5 207 V792" stroke="#C0C0C0" stroke-dasharray="5 3" stroke-dashoffset="2"/><path d="M762.5 207 V792" stroke="#C0C0C0" stroke-dasharray="5 3" stroke-dashoffset="2"/><path d="M865.5 207 V792" stroke="#C0C0C0" stroke-dasharray="5 3" stroke-dashoffset="2"/><path d="M969.5 207 V792" stroke="#C0C0C0" stroke-dasharray="5 3" stroke-dashoffset="2"/><path d="M1073.5 207 V792" stroke="#C0C0C0" stroke-dasharray="5 3" stroke-dashoffset="2"/><path d="M1177.5 207 V792" stroke="#C0C0C0" stroke-dasharray="5 3" stroke-dashoffset="2"/><path d="M1281.5 207 V792" stroke="#C0C0C0" stroke-dasharray="5 3" stroke-dashoffset="2"/><path d="M1380.5 207 V792" stroke="#C0C0C0" stroke-dasharray="5 3" stroke-dashoffset="2"/><path d="M347.5 207 V786.5 H1381" stroke="#C0C0C0" fill="none"/><path d="M347.5 787 V792" stroke="#C0C0C0"/><polyline fill="none" stroke="#50D450" stroke-width="1" shape-rendering="crispEdges" points="347.0,499.1 347.5,497.3 348.0,495.6 348.5,493.9 349.0,492.1 349.5,490.4 350.0,488.6 350.5,486.9 351.0,485.1 351.5,483.4 352.0,481.6 352.5,479.9 353.0,478.2 353.5,476.4 354.0,474.7 354.5,472.9 355.0,471.2 355.5,469.5 356.0,467.7 356.5,466.0 357.0,464.2 357.5,462.5 358.0,460.8 358.5,459.0 359.0,457.3 359.5,455.6 360.0,453.9 360.5,452.1 361.0,450.4 361.5,448.7 362.0,447.0 362.5,445.3 363.0,443.5 363.5,441.8 364.0,440.1 364.5,438.4 365.0,436.7 365.5,435.0 366.0,433.3 366.5,431.6 367.0,429.9 367.5,428.2 368.0,426.5 368.5,424.8 369.0,423.1 369.5,421.4 370.0,419.7 370.5,418.1 371.0,416.4 371.5,414.7 372.0,413.0 372.5,411.4 373.0,409.7 373.5,408.0 374.0,406.4 374.5,404.7 375.0,403.1 375.5,401.4 376.0,399.8 376.5,398.1 377.0,396.5 377.5,394.9 378.0,393.2 378.5,391.6 379.0,390.0 379.5,388.4 380.0,386.7 380.5,385.1 381.0,383.5 381.5,381.9 382.0,380.3 382.5,378.7 383.0,377.1 383.5,375.5 384.0,374.0 384.5,372.4 385.0,370.8 385.5,369.2 386.0,367.7 386.5,366.1 387.0,364.6 387.5,363.0 388.0,361.5 388.5,359.9 389.0,358.4 389.5,356.9 390.0,355.4 390.5,353.8 391.0,352.3 391.5,350.8 392.0,349.3 392.5,347.8 393.0,346.3 393.5,344.8 394.0,343.4 394.5,341.9 395.0,340.4 395.5,338.9 396.0,337.5 396.5,336.0 397.0,334.6 397.5,333.2 398.0,331.7 398.5,330.3 399.0,328.9 399.5,327.4 400.0,326.0 400.5,324.6 401.0,323.2 401.5,321.8 402.0,320.5 402.5,319.1 403.0,317.7 403.5,316.3 404.0,315.0 404.5,313.6 405.0,312.3 405.5,311.0 406.0,309.6 406.5,308.3 407.0,307.0 407.5,305.7 408.0,304.4 408.5,303.1 409.0,301.8 409.5,300.5 410.0,299.2 410.5,298.0 411.0,296.7 411.5,295.4 412.0,294.2 412.5,293.0 413.0,291.7 413.5,290.5 414.0,289.3 414.5,288.1 415.0,286.9 415.5,285.7 416.0,284.5 416.5,283.3 417.0,282.2 417.5,281.0 418.0,279.8 418.5,278.7 419.0,277.6 419.5,276.4 420.0,275.3 420.5,274.2 421.0,273.1 421.5,272.0 422.0,270.9 422.5,269.8 423.0,268.7 423.5,267.7 424.0,266.6 424.5,265.6 425.0,264.5 425.5,263.5 426.0,262.5 426.5,261.5 427.0,260.5 427.5,259.5 428.0,258.5 428.5,257.5 429.0,256.5 429.5,255.6 430.0,254.6 430.5,253.7 431.0,252.7 431.5,251.8 432.0,250.9 432.5,250.0 433.0,249.1 433.5,248.2 434.0,247.3 434.5,246.5 435.0,245.6 435.5,244.7 436.0,243.9 436.5,243.1 437.0,242.2 437.5,241.4 438.0,240.6 438.5,239.8 439.0,239.0 439.5,238.3 440.0,237.5 440.5,236.7 441.0,236.0 441.5,235.2 442.0,234.5 442.5,233.8 443.0,233.1 443.5,232.4 444.0,231.7 444.5,231.0 445.0,230.3 445.5,229.7 446.0,229.0 446.5,228.4 447.0,227.7 447.5,227.1 448.0,226.5 448.5,225.9 449.0,225.3 449.5,224.7 450.0,224.1 450.5,223.6 451.0,223.0 451.5,222.5 452.0,221.9 452.5,221.4 453.0,220.9 453.5,220.4 454.0,219.9 454.5,219.4 455.0,219.0 455.5,218.5 456.0,218.0 456.5,217.6 457.0,217.2 457.5,216.7 458.0,216.3 458.5,215.9 459.0,215.5 459.5,215.2 460.0,214.8 460.5,214.4 461.0,214.1 461.5,213.7 462.0,213.4 462.5,213.1 463.0,212.8 463.5,212.5 464.0,212.2 464.5,211.9 465.0,211.7 465.5,211.4 466.0,211.2 466.5,210.9 467.0,210.7 467.5,210.5 468.0,210.3 468.5,210.1 469.0,209.9 469.5,209.7 470.0,209.6 470.5,209.4 471.0,209.3 471.5,209.1 472.0,209.0 472.5,208.9 473.0,208.8 473.5,208.7 474.0,208.6 474.5,208.6 475.0,208.5 475.5,208.5 476.0,208.4 476.5,208.4 477.0,208.4 477.5,208.4 478.0,208.4 478.5,208.4 479.0,208.5 479.5,208.5 480.0,208.5 480.5,208.6 481.0,208.7 481.5,208.8 482.0,208.8 482.5,208.9 483.0,209.1 483.5,209.2 484.0,209.3 484.5,209.5 485.0,209.6 485.5,209.8 486.0,210.0 486.5,210.1 487.0,210.3 487.5,210.5 488.0,210.8 488.5,211.0 489.0,211.2 489.5,211.5 490.0,211.7 490.5,212.0 491.0,212.3 491.5,212.6 492.0,212.9 492.5,213.2 493.0,213.5 493.5,213.8 494.0,214.2 494.5,214.5 495.0,214.9 495.5,215.3 496.0,215.7 496.5,216.1 497.0,216.5 497.5,216.9 498.0,217.3 498.5,217.7 499.0,218.2 499.5,218.6 500.0,219.1 500.5,219.6 501.0,220.1 501.5,220.6 502.0,221.1 502.5,221.6 503.0,222.1 503.5,222.6 504.0,223.2 504.5,223.7 505.0,224.3 505.5,224.9 506.0,225.5 506.5,226.1 507.0,226.7 507.5,227.3 508.0,227.9 508.5,228.6 509.0,229.2 509.5,229.9 510.0,230.5 510.5,231.2 511.0,231.9 511.5,232.6 512.0,233.3 512.5,234.0 513.0,234.7 513.5,235.5 514.0,236.2 514.5,237.0 515.0,237.7 515.5,238.5 516.0,239.3 516.5,240.1 517.0,240.9 517.5,241.7 518.0,242.5 518.5,243.3 519.0,244.2 519.5,245.0 520.0,245.9 520.5,246.7 521.0,247.6 521.5,248.5 522.0,249.4 522.5,250.3 523.0,251.2 523.5,252.1 524.0,253.0 524.5,254.0 525.0,254.9 525.5,255.9 526.0,256.8 526.5,257.8 527.0,258.8 527.5,259.8 528.0,260.8 528.5,261.8 529.0,262.8 529.5,263.8 530.0,264.8 530.5,265.9 531.0,266.9 531.5,268.0 532.0,269.1 532.5,270.1 533.0,271.2 533.5,272.3 534.0,273.4 534.5,274.5 535.0,275.6 535.5,276.8 536.0,277.9 536.5,279.0 537.0,280.2 537.5,281.3 538.0,282.5 538.5,283.7 539.0,284.9 539.5,286.0 540.0,287.2 540.5,288.4 541.0,289.7 541.5,290.9 542.0,292.1 542.5,293.3 543.0,294.6 543.5,295.8 544.0,297.1 544.5,298.3 545.0,299.6 545.5,300.9 546.0,302.2 546.5,303.5 547.0,304.8 547.5,306.1 548.0,307.4 548.5,308.7 549.0,310.0 549.5,311.4 550.0,312.7 550.5,314.0 551.0,315.4 551.5,316.8 552.0,318.1 552.5,319.5 553.0,320.9 553.5,322.3 554.0,323.7 554.5,325.1 555.0,326.5 555.5,327.9 556.0,329.3 556.5,330.7 557.0,332.1 557.5,333.6 558.0,335.0 558.5,336.5 559.0,337.9 559.5,339.4 560.0,340.9 560.5,342.3 561.0,343.8 561.5,345.3 562.0,346.8 562.5,348.3 563.0,349.8 563.5,351.3 564.0,352.8 564.5,354.3 565.0,355.8 565.5,357.3 566.0,358.9 566.5,360.4 567.0,361.9 567.5,363.5 568.0,365.0 568.5,366.6 569.0,368.2 569.5,369.7 570.0,371.3 570.5,372.9 571.0,374.4 571.5,376.0 572.0,377.6 572.5,379.2 573.0,380.8 573.5,382.4 574.0,384.0 574.5,385.6 575.0,387.2 575.5,388.8 576.0,390.5 576.5,392.1 577.0,393.7 577.5,395.3 578.0,397.0 578.5,398.6 579.0,400.3 579.5,401.9 580.0,403.6 580.5,405.2 581.0,406.9 581.5,408.5 582.0,410.2 582.5,411.9 583.0,413.5 583.5,415.2 584.0,416.9 584.5,418.6 585.0,420.2 585.5,421.9 586.0,423.6 586.5,425.3 587.0,427.0 587.5,428.7 588.0,430.4 588.5,432.1 589.0,433.8 589.5,435.5 590.0,437.2 590.5,438.9 591.0,440.6 591.5,442.3 592.0,444.1 592.5,445.8 593.0,447.5 593.5,449.2 594.0,450.9 594.5,452.7 595.0,454.4 595.5,456.1 596.0,457.8 596.5,459.6 597.0,461.3 597.5,463.0 598.0,464.8 598.5,466.5 599.0,468.2 599.5,470.0 600.0,471.7 600.5,473.5 601.0,475.2 601.5,476.9 602.0,478.7 602.5,480.4 603.0,482.2 603.5,483.9 604.0,485.7 604.5,487.4 605.0,489.1 605.5,490.9 606.0,492.6 606.5,494.4 607.0,496.1 607.5,497.9 608.0,499.6 608.5,501.4 609.0,503.1 609.5,504.9 610.0,506.6 610.5,508.3 611.0,510.1 611.5,511.8 612.0,513.6 612.5,515.3 613.0,517.1 613.5,518.8 614.0,520.5 614.5,522.3 615.0,524.0 615.5,525.8 616.0,527.5 616.5,529.2 617.0,531.0 617.5,532.7 618.0,534.4 618.5,536.2 619.0,537.9 619.5,539.6 620.0,541.3 620.5,543.1 621.0,544.8 621.5,546.5 622.0,548.2 622.5,549.9 623.0,551.7 623.5,553.4 624.0,555.1 624.5,556.8 625.0,558.5 625.5,560.2 626.0,561.9 626.5,563.6 627.0,565.3 627.5,567.0 628.0,568.7 628.5,570.4 629.0,572.1 629.5,573.8 630.0,575.4 630.5,577.1 631.0,578.8 631.5,580.5 632.0,582.1 632.5,583.8 633.0,585.5 633.5,587.1 634.0,588.8 634.5,590.4 635.0,592.1 635.5,593.7 636.0,595.4 636.5,597.0 637.0,598.7 637.5,600.3 638.0,601.9 638.5,603.5 639.0,605.2 639.5,606.8 640.0,608.4 640.5,610.0 641.0,611.6 641.5,613.2 642.0,614.8 642.5,616.4 643.0,618.0 643.5,619.6 644.0,621.1 644.5,622.7 645.0,624.3 645.5,625.8 646.0,627.4 646.5,629.0 647.0,630.5 647.5,632.1 648.0,633.6 648.5,635.1 649.0,636.7 649.5,638.2 650.0,639.7 650.5,641.2 651.0,642.7 651.5,644.2 652.0,645.7 652.5,647.2 653.0,648.7 653.5,650.2 654.0,651.7 654.5,653.1 655.0,654.6 655.5,656.1 656.0,657.5 656.5,659.0 657.0,660.4 657.5,661.9 658.0,663.3 658.5,664.7 659.0,666.1 659.5,667.5 660.0,668.9 660.5,670.3 661.0,671.7 661.5,673.1 662.0,674.5 662.5,675.9 663.0,677.2 663.5,678.6 664.0,680.0 664.5,681.3 665.0,682.6 665.5,684.0 666.0,685.3 666.5,686.6 667.0,687.9 667.5,689.2 668.0,690.5 668.5,691.8 669.0,693.1 669.5,694.4 670.0,695.7 670.5,696.9 671.0,698.2 671.5,699.4 672.0,700.7 672.5,701.9 673.0,703.1 673.5,704.3 674.0,705.6 674.5,706.8 675.0,708.0 675.5,709.1 676.0,710.3 676.5,711.5 677.0,712.7 677.5,713.8 678.0,715.0 678.5,716.1 679.0,717.2 679.5,718.4 680.0,719.5 680.5,720.6 681.0,721.7 681.5,722.8 682.0,723.9 682.5,724.9 683.0,726.0 683.5,727.1 684.0,728.1 684.5,729.2 685.0,730.2 685.5,731.2 686.0,732.2 686.5,733.2 687.0,734.2 687.5,735.2 688.0,736.2 688.5,737.2 689.0,738.1 689.5,739.1 690.0,740.0 690.5,741.0 691.0,741.9 691.5,742.8 692.0,743.7 692.5,744.6 693.0,745.5 693.5,746.4 694.0,747.3 694.5,748.1 695.0,749.0 695.5,749.8 696.0,750.7 696.5,751.5 697.0,752.3 697.5,753.1 698.0,753.9 698.5,754.7 699.0,755.5 699.5,756.3 700.0,757.0 700.5,757.8 701.0,758.5 701.5,759.3 702.0,760.0 702.5,760.7 703.0,761.4 703.5,762.1 704.0,762.8 704.5,763.5 705.0,764.1 705.5,764.8 706.0,765.4 706.5,766.1 707.0,766.7 707.5,767.3 708.0,767.9 708.5,768.5 709.0,769.1 709.5,769.7 710.0,770.3 710.5,770.8 711.0,771.4 711.5,771.9 712.0,772.4 712.5,772.9 713.0,773.4 713.5,773.9 714.0,774.4 714.5,774.9 715.0,775.4 715.5,775.8 716.0,776.3 716.5,776.7 717.0,777.1 717.5,777.5 718.0,777.9 718.5,778.3 719.0,778.7 719.5,779.1 720.0,779.5 720.5,779.8 721.0,780.2 721.5,780.5 722.0,780.8 722.5,781.1 723.0,781.4 723.5,781.7 724.0,782.0 724.5,782.3 725.0,782.5 725.5,782.8 726.0,783.0 726.5,783.2 727.0,783.5 727.5,783.7 728.0,783.9 728.5,784.0 729.0,784.2 729.5,784.4 730.0,784.5 730.5,784.7 731.0,784.8 731.5,784.9 732.0,785.1 732.5,785.2 733.0,785.2 733.5,785.3 734.0,785.4 734.5,785.5 735.0,785.5 735.5,785.5 736.0,785.6 736.5,785.6 737.0,785.6 737.5,785.6 738.0,785.6 738.5,785.6 739.0,785.5 739.5,785.5 740.0,785.4 740.5,785.4 741.0,785.3 741.5,785.2 742.0,785.1 742.5,785.0 743.0,784.9 743.5,784.7 744.0,784.6 744.5,784.4 745.0,784.3 745.5,784.1 746.0,783.9 746.5,783.7 747.0,783.5 747.5,783.3 748.0,783.1 748.5,782.8 749.0,782.6 749.5,782.3 750.0,782.1 750.5,781.8 751.0,781.5 751.5,781.2 752.0,780.9 752.5,780.6 753.0,780.3 753.5,779.9 754.0,779.6 754.5,779.2 755.0,778.8 755.5,778.5 756.0,778.1 756.5,777.7 757.0,777.3 757.5,776.8 758.0,776.4 758.5,776.0 759.0,775.5 759.5,775.0 760.0,774.6 760.5,774.1 761.0,773.6 761.5,773.1 762.0,772.6 762.5,772.1 763.0,771.5 763.5,771.0 764.0,770.4 764.5,769.9 765.0,769.3 765.5,768.7 766.0,768.1 766.5,767.5 767.0,766.9 767.5,766.3 768.0,765.6 768.5,765.0 769.0,764.3 769.5,763.7 770.0,763.0 770.5,762.3 771.0,761.6 771.5,760.9 772.0,760.2 772.5,759.5 773.0,758.8 773.5,758.0 774.0,757.3 774.5,756.5 775.0,755.7 775.5,755.0 776.0,754.2 776.5,753.4 777.0,752.6 777.5,751.8 778.0,750.9 778.5,750.1 779.0,749.3 779.5,748.4 780.0,747.5 780.5,746.7 781.0,745.8 781.5,744.9 782.0,744.0 782.5,743.1 783.0,742.2 783.5,741.3 784.0,740.3 784.5,739.4 785.0,738.4 785.5,737.5 786.0,736.5 786.5,735.5 787.0,734.5 787.5,733.5 788.0,732.5 788.5,731.5 789.0,730.5 789.5,729.5 790.0,728.4 790.5,727.4 791.0,726.3 791.5,725.3 792.0,724.2 792.5,723.1 793.0,722.0 793.5,720.9 794.0,719.8 794.5,718.7 795.0,717.6 795.5,716.4 796.0,715.3 796.5,714.2 797.0,713.0 797.5,711.8 798.0,710.7 798.5,709.5 799.0,708.3 799.5,707.1 800.0,705.9 800.5,704.7 801.0,703.5 801.5,702.3 802.0,701.0 802.5,699.8 803.0,698.6 803.5,697.3 804.0,696.0 804.5,694.8 805.0,693.5 805.5,692.2 806.0,690.9 806.5,689.6 807.0,688.3 807.5,687.0 808.0,685.7 808.5,684.4 809.0,683.0 809.5,681.7 810.0,680.4 810.5,679.0 811.0,677.7 811.5,676.3 812.0,674.9 812.5,673.5 813.0,672.2 813.5,670.8 814.0,669.4 814.5,668.0 815.0,666.6 815.5,665.1 816.0,663.7 816.5,662.3 817.0,660.8 817.5,659.4 818.0,658.0 818.5,656.5 819.0,655.1 819.5,653.6 820.0,652.1 820.5,650.6 821.0,649.2 821.5,647.7 822.0,646.2 822.5,644.7 823.0,643.2 823.5,641.7 824.0,640.2 824.5,638.6 825.0,637.1 825.5,635.6 826.0,634.1 826.5,632.5 827.0,631.0 827.5,629.4 828.0,627.9 828.5,626.3 829.0,624.8 829.5,623.2 830.0,621.6 830.5,620.0 831.0,618.5 831.5,616.9 832.0,615.3 832.5,613.7 833.0,612.1 833.5,610.5 834.0,608.9 834.5,607.3 835.0,605.6 835.5,604.0 836.0,602.4 836.5,600.8 837.0,599.1 837.5,597.5 838.0,595.9 838.5,594.2 839.0,592.6 839.5,590.9 840.0,589.3 840.5,587.6 841.0,586.0 841.5,584.3 842.0,582.6 842.5,581.0 843.0,579.3 843.5,577.6 844.0,575.9 844.5,574.3 845.0,572.6 845.5,570.9 846.0,569.2 846.5,567.5 847.0,565.8 847.5,564.1 848.0,562.4 848.5,560.7 849.0,559.0 849.5,557.3 850.0,555.6 850.5,553.9 851.0,552.2 851.5,550.5 852.0,548.7 852.5,547.0 853.0,545.3 853.5,543.6 854.0,541.9 854.5,540.1 855.0,538.4 855.5,536.7 856.0,535.0 856.5,533.2 857.0,531.5 857.5,529.8 858.0,528.0 858.5,526.3 859.0,524.5 859.5,522.8 860.0,521.1 860.5,519.3 861.0,517.6 861.5,515.8 862.0,514.1 862.5,512.4 863.0,510.6 863.5,508.9 864.0,507.1 864.5,505.4 865.0,503.6 865.5,501.9 866.0,500.1 866.5,498.4 867.0,496.7 867.5,494.9 868.0,493.2 868.5,491.4 869.0,489.7 869.5,487.9 870.0,486.2 870.5,484.4 871.0,482.7 871.5,480.9 872.0,479.2 872.5,477.5 873.0,475.7 873.5,474.0 874.0,472.2 874.5,470.5 875.0,468.8 875.5,467.0 876.0,465.3 876.5,463.6 877.0,461.8 877.5,460.1 878.0,458.4 878.5,456.6 879.0,454.9 879.5,453.2 880.0,451.4 880.5,449.7 881.0,448.0 881.5,446.3 882.0,444.6 882.5,442.8 883.0,441.1 883.5,439.4 884.0,437.7 884.5,436.0 885.0,434.3 885.5,432.6 886.0,430.9 886.5,429.2 887.0,427.5 887.5,425.8 888.0,424.1 888.5,422.4 889.0,420.7 889.5,419.1 890.0,417.4 890.5,415.7 891.0,414.0 891.5,412.4 892.0,410.7 892.5,409.0 893.0,407.4 893.5,405.7 894.0,404.1 894.5,402.4 895.0,400.8 895.5,399.1 896.0,397.5 896.5,395.8 897.0,394.2 897.5,392.6 898.0,390.9 898.5,389.3 899.0,387.7 899.5,386.1 900.0,384.5 900.5,382.9 901.0,381.3 901.5,379.7 902.0,378.1 902.5,376.5 903.0,374.9 903.5,373.3 904.0,371.8 904.5,370.2 905.0,368.6 905.5,367.1 906.0,365.5 906.5,364.0 907.0,362.4 907.5,360.9 908.0,359.3 908.5,357.8 909.0,356.3 909.5,354.7 910.0,353.2 910.5,351.7 911.0,350.2 911.5,348.7 912.0,347.2 912.5,345.7 913.0,344.2 913.5,342.8 914.0,341.3 914.5,339.8 915.0,338.4 915.5,336.9 916.0,335.5 916.5,334.0 917.0,332.6 917.5,331.1 918.0,329.7 918.5,328.3 919.0,326.9 919.5,325.5 920.0,324.1 920.5,322.7 921.0,321.3 921.5,319.9 922.0,318.5 922.5,317.2 923.0,315.8 923.5,314.5 924.0,313.1 924.5,311.8 925.0,310.4 925.5,309.1 926.0,307.8 926.5,306.5 927.0,305.2 927.5,303.8 928.0,302.6 928.5,301.3 929.0,300.0 929.5,298.7 930.0,297.5 930.5,296.2 931.0,294.9 931.5,293.7 932.0,292.5 932.5,291.2 933.0,290.0 933.5,288.8 934.0,287.6 934.5,286.4 935.0,285.2 935.5,284.0 936.0,282.9 936.5,281.7 937.0,280.5 937.5,279.4 938.0,278.2 938.5,277.1 939.0,276.0 939.5,274.9 940.0,273.7 940.5,272.6 941.0,271.6 941.5,270.5 942.0,269.4 942.5,268.3 943.0,267.3 943.5,266.2 944.0,265.2 944.5,264.1 945.0,263.1 945.5,262.1 946.0,261.1 946.5,260.1 947.0,259.1 947.5,258.1 948.0,257.1 948.5,256.2 949.0,255.2 949.5,254.2 950.0,253.3 950.5,252.4 951.0,251.5 951.5,250.5 952.0,249.6 952.5,248.7 953.0,247.9 953.5,247.0 954.0,246.1 954.5,245.3 955.0,244.4 955.5,243.6 956.0,242.7 956.5,241.9 957.0,241.1 957.5,240.3 958.0,239.5 958.5,238.7 959.0,237.9 959.5,237.2 960.0,236.4 960.5,235.7 961.0,234.9 961.5,234.2 962.0,233.5 962.5,232.8 963.0,232.1 963.5,231.4 964.0,230.7 964.5,230.1 965.0,229.4 965.5,228.8 966.0,228.1 966.5,227.5 967.0,226.9 967.5,226.3 968.0,225.7 968.5,225.1 969.0,224.5 969.5,223.9 970.0,223.4 970.5,222.8 971.0,222.3 971.5,221.7 972.0,221.2 972.5,220.7 973.0,220.2 973.5,219.7 974.0,219.2 974.5,218.8 975.0,218.3 975.5,217.9 976.0,217.4 976.5,217.0 977.0,216.6 977.5,216.2 978.0,215.8 978.5,215.4 979.0,215.0 979.5,214.6 980.0,214.3 980.5,213.9 981.0,213.6 981.5,213.3 982.0,213.0 982.5,212.7 983.0,212.4 983.5,212.1 984.0,211.8 984.5,211.6 985.0,211.3 985.5,211.1 986.0,210.8 986.5,210.6 987.0,210.4 987.5,210.2 988.0,210.0 988.5,209.8 989.0,209.7 989.5,209.5 990.0,209.4 990.5,209.2 991.0,209.1 991.5,209.0 992.0,208.9 992.5,208.8 993.0,208.7 993.5,208.6 994.0,208.6 994.5,208.5 995.0,208.5 995.5,208.4 996.0,208.4 996.5,208.4 997.0,208.4 997.5,208.4 998.0,208.4 998.5,208.5 999.0,208.5 999.5,208.6 1000.0,208.6 1000.5,208.7 1001.0,208.8 1001.5,208.9 1002.0,209.0 1002.5,209.1 1003.0,209.2 1003.5,209.4 1004.0,209.5 1004.5,209.7 1005.0,209.8 1005.5,210.0 1006.0,210.2 1006.5,210.4 1007.0,210.6 1007.5,210.8 1008.0,211.1 1008.5,211.3 1009.0,211.6 1009.5,211.8 1010.0,212.1 1010.5,212.4 1011.0,212.7 1011.5,213.0 1012.0,213.3 1012.5,213.6 1013.0,214.0 1013.5,214.3 1014.0,214.7 1014.5,215.0 1015.0,215.4 1015.5,215.8 1016.0,216.2 1016.5,216.6 1017.0,217.0 1017.5,217.5 1018.0,217.9 1018.5,218.4 1019.0,218.8 1019.5,219.3 1020.0,219.8 1020.5,220.3 1021.0,220.8 1021.5,221.3 1022.0,221.8 1022.5,222.3 1023.0,222.9 1023.5,223.4 1024.0,224.0 1024.5,224.5 1025.0,225.1 1025.5,225.7 1026.0,226.3 1026.5,226.9 1027.0,227.5 1027.5,228.2 1028.0,228.8 1028.5,229.5 1029.0,230.1 1029.5,230.8 1030.0,231.5 1030.5,232.2 1031.0,232.9 1031.5,233.6 1032.0,234.3 1032.5,235.0 1033.0,235.8 1033.5,236.5 1034.0,237.3 1034.5,238.0 1035.0,238.8 1035.5,239.6 1036.0,240.4 1036.5,241.2 1037.0,242.0 1037.5,242.8 1038.0,243.6 1038.5,244.5 1039.0,245.3 1039.5,246.2 1040.0,247.1 1040.5,247.9 1041.0,248.8 1041.5,249.7 1042.0,250.6 1042.5,251.5 1043.0,252.5 1043.5,253.4 1044.0,254.3 1044.5,255.3 1045.0,256.2 1045.5,257.2 1046.0,258.2 1046.5,259.2 1047.0,260.2 1047.5,261.2 1048.0,262.2 1048.5,263.2 1049.0,264.2 1049.5,265.3 1050.0,266.3 1050.5,267.4 1051.0,268.4 1051.5,269.5 1052.0,270.6 1052.5,271.7 1053.0,272.8 1053.5,273.9 1054.0,275.0 1054.5,276.1 1055.0,277.2 1055.5,278.4 1056.0,279.5 1056.5,280.6 1057.0,281.8 1057.5,283.0 1058.0,284.1 1058.5,285.3 1059.0,286.5 1059.5,287.7 1060.0,288.9 1060.5,290.1 1061.0,291.4 1061.5,292.6 1062.0,293.8 1062.5,295.1 1063.0,296.3 1063.5,297.6 1064.0,298.8 1064.5,300.1 1065.0,301.4 1065.5,302.7 1066.0,304.0 1066.5,305.3 1067.0,306.6 1067.5,307.9 1068.0,309.2 1068.5,310.6 1069.0,311.9 1069.5,313.2 1070.0,314.6 1070.5,315.9 1071.0,317.3 1071.5,318.7 1072.0,320.1 1072.5,321.4 1073.0,322.8 1073.5,324.2 1074.0,325.6 1074.5,327.0 1075.0,328.4 1075.5,329.9 1076.0,331.3 1076.5,332.7 1077.0,334.2 1077.5,335.6 1078.0,337.1 1078.5,338.5 1079.0,340.0 1079.5,341.4 1080.0,342.9 1080.5,344.4 1081.0,345.9 1081.5,347.4 1082.0,348.9 1082.5,350.4 1083.0,351.9 1083.5,353.4 1084.0,354.9 1084.5,356.4 1085.0,357.9 1085.5,359.5 1086.0,361.0 1086.5,362.6 1087.0,364.1 1087.5,365.7 1088.0,367.2 1088.5,368.8 1089.0,370.3 1089.5,371.9 1090.0,373.5 1090.5,375.1 1091.0,376.7 1091.5,378.2 1092.0,379.8 1092.5,381.4 1093.0,383.0 1093.5,384.6 1094.0,386.3 1094.5,387.9 1095.0,389.5 1095.5,391.1 1096.0,392.7 1096.5,394.4 1097.0,396.0 1097.5,397.6 1098.0,399.3 1098.5,400.9 1099.0,402.6 1099.5,404.2 1100.0,405.9 1100.5,407.5 1101.0,409.2 1101.5,410.9 1102.0,412.5 1102.5,414.2 1103.0,415.9 1103.5,417.6 1104.0,419.2 1104.5,420.9 1105.0,422.6 1105.5,424.3 1106.0,426.0 1106.5,427.7 1107.0,429.4 1107.5,431.1 1108.0,432.8 1108.5,434.5 1109.0,436.2 1109.5,437.9 1110.0,439.6 1110.5,441.3 1111.0,443.0 1111.5,444.7 1112.0,446.5 1112.5,448.2 1113.0,449.9 1113.5,451.6 1114.0,453.3 1114.5,455.1 1115.0,456.8 1115.5,458.5 1116.0,460.3 1116.5,462.0 1117.0,463.7 1117.5,465.5 1118.0,467.2 1118.5,468.9 1119.0,470.7 1119.5,472.4 1120.0,474.2 1120.5,475.9 1121.0,477.6 1121.5,479.4 1122.0,481.1 1122.5,482.9 1123.0,484.6 1123.5,486.4 1124.0,488.1 1124.5,489.8 1125.0,491.6 1125.5,493.3 1126.0,495.1 1126.5,496.8 1127.0,498.6 1127.5,500.3 1128.0,502.1 1128.5,503.8 1129.0,505.6 1129.5,507.3 1130.0,509.0 1130.5,510.8 1131.0,512.5 1131.5,514.3 1132.0,516.0 1132.5,517.8 1133.0,519.5 1133.5,521.2 1134.0,523.0 1134.5,524.7 1135.0,526.5 1135.5,528.2 1136.0,529.9 1136.5,531.7 1137.0,533.4 1137.5,535.1 1138.0,536.9 1138.5,538.6 1139.0,540.3 1139.5,542.0 1140.0,543.8 1140.5,545.5 1141.0,547.2 1141.5,548.9 1142.0,550.6 1142.5,552.4 1143.0,554.1 1143.5,555.8 1144.0,557.5 1144.5,559.2 1145.0,560.9 1145.5,562.6 1146.0,564.3 1146.5,566.0 1147.0,567.7 1147.5,569.4 1148.0,571.1 1148.5,572.7 1149.0,574.4 1149.5,576.1 1150.0,577.8 1150.5,579.5 1151.0,581.1 1151.5,582.8 1152.0,584.5 1152.5,586.1 1153.0,587.8 1153.5,589.4 1154.0,591.1 1154.5,592.7 1155.0,594.4 1155.5,596.0 1156.0,597.7 1156.5,599.3 1157.0,600.9 1157.5,602.6 1158.0,604.2 1158.5,605.8 1159.0,607.4 1159.5,609.0 1160.0,610.6 1160.5,612.2 1161.0,613.8 1161.5,615.4 1162.0,617.0 1162.5,618.6 1163.0,620.2 1163.5,621.8 1164.0,623.3 1164.5,624.9 1165.0,626.5 1165.5,628.0 1166.0,629.6 1166.5,631.1 1167.0,632.7 1167.5,634.2 1168.0,635.7 1168.5,637.3 1169.0,638.8 1169.5,640.3 1170.0,641.8 1170.5,643.3 1171.0,644.8 1171.5,646.3 1172.0,647.8 1172.5,649.3 1173.0,650.8 1173.5,652.3 1174.0,653.7 1174.5,655.2 1175.0,656.7 1175.5,658.1 1176.0,659.6 1176.5,661.0 1177.0,662.4 1177.5,663.9 1178.0,665.3 1178.5,666.7 1179.0,668.1 1179.5,669.5 1180.0,670.9 1180.5,672.3 1181.0,673.7 1181.5,675.1 1182.0,676.4 1182.5,677.8 1183.0,679.1 1183.5,680.5 1184.0,681.8 1184.5,683.2 1185.0,684.5 1185.5,685.8 1186.0,687.1 1186.5,688.5 1187.0,689.8 1187.5,691.1 1188.0,692.3 1188.5,693.6 1189.0,694.9 1189.5,696.2 1190.0,697.4 1190.5,698.7 1191.0,699.9 1191.5,701.2 1192.0,702.4 1192.5,703.6 1193.0,704.8 1193.5,706.0 1194.0,707.2 1194.5,708.4 1195.0,709.6 1195.5,710.8 1196.0,712.0 1196.5,713.1 1197.0,714.3 1197.5,715.4 1198.0,716.6 1198.5,717.7 1199.0,718.8 1199.5,719.9 1200.0,721.0 1200.5,722.1 1201.0,723.2 1201.5,724.3 1202.0,725.4 1202.5,726.4 1203.0,727.5 1203.5,728.5 1204.0,729.6 1204.5,730.6 1205.0,731.6 1205.5,732.6 1206.0,733.6 1206.5,734.6 1207.0,735.6 1207.5,736.6 1208.0,737.6 1208.5,738.5 1209.0,739.5 1209.5,740.4 1210.0,741.3 1210.5,742.3 1211.0,743.2 1211.5,744.1 1212.0,745.0 1212.5,745.9 1213.0,746.8 1213.5,747.6 1214.0,748.5 1214.5,749.3 1215.0,750.2 1215.5,751.0 1216.0,751.8 1216.5,752.7 1217.0,753.5 1217.5,754.3 1218.0,755.0 1218.5,755.8 1219.0,756.6 1219.5,757.3 1220.0,758.1 1220.5,758.8 1221.0,759.6 1221.5,760.3 1222.0,761.0 1222.5,761.7 1223.0,762.4 1223.5,763.1 1224.0,763.7 1224.5,764.4 1225.0,765.1 1225.5,765.7 1226.0,766.3 1226.5,767.0 1227.0,767.6 1227.5,768.2 1228.0,768.8 1228.5,769.3 1229.0,769.9 1229.5,770.5 1230.0,771.0 1230.5,771.6 1231.0,772.1 1231.5,772.6 1232.0,773.1 1232.5,773.6 1233.0,774.1 1233.5,774.6 1234.0,775.1 1234.5,775.6 1235.0,776.0 1235.5,776.4 1236.0,776.9 1236.5,777.3 1237.0,777.7 1237.5,778.1 1238.0,778.5 1238.5,778.9 1239.0,779.2 1239.5,779.6 1240.0,780.0 1240.5,780.3 1241.0,780.6 1241.5,780.9 1242.0,781.2 1242.5,781.5 1243.0,781.8 1243.5,782.1 1244.0,782.4 1244.5,782.6 1245.0,782.9 1245.5,783.1 1246.0,783.3 1246.5,783.5 1247.0,783.7 1247.5,783.9 1248.0,784.1 1248.5,784.3 1249.0,784.5 1249.5,784.6 1250.0,784.7 1250.5,784.9 1251.0,785.0 1251.5,785.1 1252.0,785.2 1252.5,785.3 1253.0,785.4 1253.5,785.4 1254.0,785.5 1254.5,785.5 1255.0,785.6 1255.5,785.6 1256.0,785.6 1256.5,785.6 1257.0,785.6 1257.5,785.6 1258.0,785.5 1258.5,785.5 1259.0,785.5 1259.5,785.4 1260.0,785.3 1260.5,785.2 1261.0,785.1 1261.5,785.0 1262.0,784.9 1262.5,784.8 1263.0,784.7 1263.5,784.5 1264.0,784.4 1264.5,784.2 1265.0,784.0 1265.5,783.8 1266.0,783.6 1266.5,783.4 1267.0,783.2 1267.5,783.0 1268.0,782.7 1268.5,782.5 1269.0,782.2 1269.5,782.0 1270.0,781.7 1270.5,781.4 1271.0,781.1 1271.5,780.8 1272.0,780.5 1272.5,780.1 1273.0,779.8 1273.5,779.4 1274.0,779.1 1274.5,778.7 1275.0,778.3 1275.5,777.9 1276.0,777.5 1276.5,777.1 1277.0,776.7 1277.5,776.2 1278.0,775.8 1278.5,775.3 1279.0,774.9 1279.5,774.4 1280.0,773.9 1280.5,773.4 1281.0,772.9 1281.5,772.4 1282.0,771.8 1282.5,771.3 1283.0,770.8 1283.5,770.2 1284.0,769.6 1284.5,769.1 1285.0,768.5 1285.5,767.9 1286.0,767.3 1286.5,766.6 1287.0,766.0 1287.5,765.4 1288.0,764.7 1288.5,764.1 1289.0,763.4 1289.5,762.7 1290.0,762.0 1290.5,761.3 1291.0,760.6 1291.5,759.9 1292.0,759.2 1292.5,758.5 1293.0,757.7 1293.5,757.0 1294.0,756.2 1294.5,755.4 1295.0,754.7 1295.5,753.9 1296.0,753.1 1296.5,752.3 1297.0,751.4 1297.5,750.6 1298.0,749.8 1298.5,748.9 1299.0,748.1 1299.5,747.2 1300.0,746.3 1300.5,745.4 1301.0,744.5 1301.5,743.6 1302.0,742.7 1302.5,741.8 1303.0,740.9 1303.5,739.9 1304.0,739.0 1304.5,738.0 1305.0,737.1 1305.5,736.1 1306.0,735.1 1306.5,734.1 1307.0,733.1 1307.5,732.1 1308.0,731.1 1308.5,730.1 1309.0,729.0 1309.5,728.0 1310.0,727.0 1310.5,725.9 1311.0,724.8 1311.5,723.8 1312.0,722.7 1312.5,721.6 1313.0,720.5 1313.5,719.4 1314.0,718.2 1314.5,717.1 1315.0,716.0 1315.5,714.8 1316.0,713.7 1316.5,712.5 1317.0,711.4 1317.5,710.2 1318.0,709.0 1318.5,707.8 1319.0,706.6 1319.5,705.4 1320.0,704.2 1320.5,703.0 1321.0,701.8 1321.5,700.5 1322.0,699.3 1322.5,698.1 1323.0,696.8 1323.5,695.5 1324.0,694.3 1324.5,693.0 1325.0,691.7 1325.5,690.4 1326.0,689.1 1326.5,687.8 1327.0,686.5 1327.5,685.2 1328.0,683.8 1328.5,682.5 1329.0,681.2 1329.5,679.8 1330.0,678.5 1330.5,677.1 1331.0,675.7 1331.5,674.4 1332.0,673.0 1332.5,671.6 1333.0,670.2 1333.5,668.8 1334.0,667.4 1334.5,666.0 1335.0,664.6 1335.5,663.1 1336.0,661.7 1336.5,660.3 1337.0,658.8 1337.5,657.4 1338.0,655.9 1338.5,654.5 1339.0,653.0 1339.5,651.5 1340.0,650.1 1340.5,648.6 1341.0,647.1 1341.5,645.6 1342.0,644.1 1342.5,642.6 1343.0,641.1 1343.5,639.6 1344.0,638.0 1344.5,636.5 1345.0,635.0 1345.5,633.4 1346.0,631.9 1346.5,630.4 1347.0,628.8 1347.5,627.3 1348.0,625.7 1348.5,624.1 1349.0,622.6 1349.5,621.0 1350.0,619.4 1350.5,617.8 1351.0,616.2 1351.5,614.6 1352.0,613.0 1352.5,611.4 1353.0,609.8 1353.5,608.2 1354.0,606.6 1354.5,605.0 1355.0,603.4 1355.5,601.8 1356.0,600.1 1356.5,598.5 1357.0,596.9 1357.5,595.2 1358.0,593.6 1358.5,591.9 1359.0,590.3 1359.5,588.6 1360.0,587.0 1360.5,585.3 1361.0,583.6 1361.5,582.0 1362.0,580.3 1362.5,578.6 1363.0,577.0 1363.5,575.3 1364.0,573.6 1364.5,571.9 1365.0,570.2 1365.5,568.5 1366.0,566.8 1366.5,565.1 1367.0,563.4 1367.5,561.7 1368.0,560.0 1368.5,558.3 1369.0,556.6 1369.5,554.9 1370.0,553.2 1370.5,551.5 1371.0,549.8 1371.5,548.1 1372.0,546.3 1372.5,544.6 1373.0,542.9 1373.5,541.2 1374.0,539.4 1374.5,537.7 1375.0,536.0 1375.5,534.3 1376.0,532.5 1376.5,530.8 1377.0,529.1 1377.5,527.3 1378.0,525.6 1378.5,523.8 1379.0,522.1 1379.5,520.4 1380.0,518.6"/></svg>
<div class="t" style="left:250px;top:238px;width:86.4px;text-align:right;color:#50D050;font-size:12.3px;letter-spacing:-0.4px;-webkit-text-stroke:0">8.49</div>
<div class="t" style="left:250px;top:280px;width:86.4px;text-align:right;color:#50D050;font-size:12.3px;letter-spacing:-0.4px;-webkit-text-stroke:0">7.07</div>
<div class="t" style="left:250px;top:322px;width:86.4px;text-align:right;color:#50D050;font-size:12.3px;letter-spacing:-0.4px;-webkit-text-stroke:0">5.66</div>
<div class="t" style="left:250px;top:365px;width:86.4px;text-align:right;color:#50D050;font-size:12.3px;letter-spacing:-0.4px;-webkit-text-stroke:0">4.24</div>
<div class="t" style="left:250px;top:407px;width:86.4px;text-align:right;color:#50D050;font-size:12.3px;letter-spacing:-0.4px;-webkit-text-stroke:0">2.83</div>
<div class="t" style="left:250px;top:449px;width:86.4px;text-align:right;color:#50D050;font-size:12.3px;letter-spacing:-0.4px;-webkit-text-stroke:0">1.41</div>
<div class="t" style="left:250px;top:491px;width:86.4px;text-align:right;color:#50D050;font-size:12.3px;letter-spacing:-0.4px;-webkit-text-stroke:0">0.00</div>
<div class="t" style="left:250px;top:534px;width:86.4px;text-align:right;color:#50D050;font-size:12.3px;letter-spacing:-0.4px;-webkit-text-stroke:0">-1.41</div>
<div class="t" style="left:250px;top:576px;width:86.4px;text-align:right;color:#50D050;font-size:12.3px;letter-spacing:-0.4px;-webkit-text-stroke:0">-2.83</div>
<div class="t" style="left:250px;top:618px;width:86.4px;text-align:right;color:#50D050;font-size:12.3px;letter-spacing:-0.4px;-webkit-text-stroke:0">-4.24</div>
<div class="t" style="left:250px;top:661px;width:86.4px;text-align:right;color:#50D050;font-size:12.3px;letter-spacing:-0.4px;-webkit-text-stroke:0">-5.66</div>
<div class="t" style="left:250px;top:703px;width:86.4px;text-align:right;color:#50D050;font-size:12.3px;letter-spacing:-0.4px;-webkit-text-stroke:0">-7.07</div>
<div class="t" style="left:250px;top:745px;width:86.4px;text-align:right;color:#50D050;font-size:12.3px;letter-spacing:-0.4px;-webkit-text-stroke:0">-8.49</div>
<div class="t" style="left:330px;top:186px;color:#50D050;font-size:12.8px;letter-spacing:0;-webkit-text-stroke:0">V</div>
<div class="t" style="left:347px;top:798px;color:#50D050;font-size:12.3px;letter-spacing:-0.4px;-webkit-text-stroke:0">0.00 ms</div>
<div class="t" style="left:420px;top:798px;width:60px;text-align:center;color:#50D050;font-size:12.3px;letter-spacing:-0.4px;-webkit-text-stroke:0">0.20</div>
<div class="t" style="left:524px;top:798px;width:60px;text-align:center;color:#50D050;font-size:12.3px;letter-spacing:-0.4px;-webkit-text-stroke:0">0.40</div>
<div class="t" style="left:628px;top:798px;width:60px;text-align:center;color:#50D050;font-size:12.3px;letter-spacing:-0.4px;-webkit-text-stroke:0">0.60</div>
<div class="t" style="left:732px;top:798px;width:60px;text-align:center;color:#50D050;font-size:12.3px;letter-spacing:-0.4px;-webkit-text-stroke:0">0.80</div>
<div class="t" style="left:835px;top:798px;width:60px;text-align:center;color:#50D050;font-size:12.3px;letter-spacing:-0.4px;-webkit-text-stroke:0">1.00</div>
<div class="t" style="left:939px;top:798px;width:60px;text-align:center;color:#50D050;font-size:12.3px;letter-spacing:-0.4px;-webkit-text-stroke:0">1.20</div>
<div class="t" style="left:1043px;top:798px;width:60px;text-align:center;color:#50D050;font-size:12.3px;letter-spacing:-0.4px;-webkit-text-stroke:0">1.40</div>
<div class="t" style="left:1147px;top:798px;width:60px;text-align:center;color:#50D050;font-size:12.3px;letter-spacing:-0.4px;-webkit-text-stroke:0">1.60</div>
<div class="t" style="left:1251px;top:798px;width:60px;text-align:center;color:#50D050;font-size:12.3px;letter-spacing:-0.4px;-webkit-text-stroke:0">1.80</div>
<div class="t" style="left:1300px;top:798px;width:80.4px;text-align:right;color:#50D050;font-size:12.3px;letter-spacing:-0.4px;-webkit-text-stroke:0">1.99</div>
<svg class="a" style="left:290px;top:147px;opacity:1.0" width="16" height="16" viewBox="0 0 16 16"><polyline points="1,12 5,8 10,13 14,9" transform="translate(0,0)" fill="none" stroke="#005000" stroke-width="3.4" stroke-linejoin="miter"/><polyline points="1,12 5,8 10,13 14,9" transform="translate(0,0)" fill="none" stroke="#40D040" stroke-width="1.6"/><path d="M11 1 V7 M8 4 H14" stroke="#102090" stroke-width="2"/></svg>
<svg class="a" style="left:313px;top:147px;opacity:1.0" width="16" height="16" viewBox="0 0 16 16"><polyline points="1,12 5,8 10,13 14,9" transform="translate(0,0)" fill="none" stroke="#005000" stroke-width="3.4" stroke-linejoin="miter"/><polyline points="1,12 5,8 10,13 14,9" transform="translate(0,0)" fill="none" stroke="#40D040" stroke-width="1.6"/><path d="M9 4 H15" stroke="#102090" stroke-width="2"/></svg>
<svg class="a" style="left:336px;top:147px;opacity:1.0" width="16" height="16" viewBox="0 0 16 16"><g shape-rendering="crispEdges"><rect x="0.5" y="0.5" width="13" height="14" fill="#808000" stroke="#000" stroke-width="1"/><rect x="3" y="1" width="8" height="6" fill="#ECE9D8"/><rect x="3" y="9" width="8" height="6" fill="#000"/><rect x="8" y="10" width="2" height="3" fill="#fff"/><rect x="12" y="2" width="1" height="1" fill="#fff"/></g><polyline points="1,9 5,5 10,10 15,6" transform="translate(0,0)" fill="none" stroke="#005000" stroke-width="3.4" stroke-linejoin="miter"/><polyline points="1,9 5,5 10,10 15,6" transform="translate(0,0)" fill="none" stroke="#40D040" stroke-width="1.6"/></svg>
<svg class="a" style="left:359px;top:147px;opacity:1.0" width="16" height="16" viewBox="0 0 16 16"><g shape-rendering="crispEdges"><path d="M1.5 1.5 H6.5 L8.5 3.5 V10.5 H1.5 Z" fill="#fff" stroke="#000" stroke-width="1"/><path d="M3 4.5 H6 M3 6.5 H7 M3 8.5 H6" stroke="#000" stroke-width="1"/><path d="M7.5 5.5 H12.5 L14.5 7.5 V15.5 H7.5 Z" fill="#fff" stroke="#102070" stroke-width="1"/><path d="M9 9.5 H13 M9 11.5 H13 M9 13.5 H13" stroke="#102070" stroke-width="1"/></g></svg>
<div class="a" style="left:383px;top:146px;width:1px;height:20px;background:#ACA899"></div>
<div class="a" style="left:384px;top:146px;width:1px;height:20px;background:#fff"></div>
<svg class="a" style="left:390px;top:147px;opacity:1.0" width="16" height="16" viewBox="0 0 16 16"><rect x="1" y="1" width="14" height="14" fill="#C8C6BC"/><polyline points="2,3 6,7 10,3 14,7" fill="none" stroke="#ECE9D8" stroke-width="1.6"/><polyline points="2,10 6,14 10,10 14,14" fill="none" stroke="#ECE9D8" stroke-width="1.6"/></svg>
<svg class="a" style="left:413px;top:147px;opacity:1.0" width="16" height="16" viewBox="0 0 16 16"><rect x="2" y="3" width="9" height="7" fill="#F0E8B0" stroke="#000" stroke-width="1.1"/><rect x="4" y="1" width="6" height="3" fill="#fff" stroke="#000" stroke-width="0.9"/><path d="M1 13 H16 M3 11 V16 M8 11 V16 M13 1 V16" stroke="#000" stroke-width="1"/><path d="M9 13 L11 15 L15 10" stroke="#20B020" stroke-width="1.6" fill="none"/></svg>
<div class="a" style="left:436px;top:146px;width:1px;height:20px;background:#ACA899"></div>
<div class="a" style="left:437px;top:146px;width:1px;height:20px;background:#fff"></div>
<svg class="a" style="left:444px;top:147px;opacity:1.0" width="16" height="16" viewBox="0 0 16 16"><rect x="1" y="5" width="12" height="10" fill="#fff" stroke="#A02020" stroke-width="1"/><rect x="1" y="5" width="12" height="3" fill="#203080"/><path d="M3 10 H11 M3 12.5 H11 M5 8 V15 M8 8 V15" stroke="#404040" stroke-width="0.8"/><path d="M9 11 L15 2" stroke="#000" stroke-width="2.4"/><path d="M9 11 L15 2" stroke="#F0D040" stroke-width="1.2"/></svg>
<svg class="a" style="left:467px;top:147px;opacity:1.0" width="16" height="16" viewBox="0 0 16 16"><text x="8" y="5.5" font-family="Liberation Sans" font-size="6" font-weight="bold" text-anchor="middle">3.25</text><text x="8" y="11" font-family="Liberation Sans" font-size="6" font-weight="bold" text-anchor="middle">5.60</text><text x="8" y="16.5" font-family="Liberation Sans" font-size="6" font-weight="bold" text-anchor="middle">7.00</text></svg>
<div class="a" style="left:490px;top:146px;width:1px;height:20px;background:#ACA899"></div>
<div class="a" style="left:491px;top:146px;width:1px;height:20px;background:#fff"></div>
<svg class="a" style="left:497px;top:147px;opacity:1.0" width="16" height="16" viewBox="0 0 16 16"><path d="M1 1.5 H16 M2 1 V3 M5 1 V3 M8 1 V3 M11 1 V3 M14 1 V3" stroke="#000" stroke-width="1"/><circle cx="7" cy="8" r="3.5" fill="#C0F0F0" stroke="#000" stroke-width="1.2"/><path d="M4 11 L1 14" stroke="#000" stroke-width="2.2"/><path d="M11 14 H15 M13 12 V16" stroke="#000" stroke-width="1"/></svg>
<svg class="a" style="left:520px;top:147px;opacity:1.0" width="16" height="16" viewBox="0 0 16 16"><path d="M1 1.5 H16 M2 1 V3 M5 1 V3 M8 1 V3 M11 1 V3 M14 1 V3" stroke="#000" stroke-width="1"/><circle cx="7" cy="8" r="3.5" fill="#C0F0F0" stroke="#000" stroke-width="1.2"/><path d="M4 11 L1 14" stroke="#000" stroke-width="2.2"/><path d="M11 14 H15" stroke="#000" stroke-width="1"/></svg>
<svg class="a" style="left:544px;top:147px;opacity:1.0" width="16" height="16" viewBox="0 0 16 16"><path d="M1.5 1 V16 M14.5 1 V16" stroke="#000" stroke-width="1.1"/><polyline points="2,5 6,10 10,6 14,10" transform="translate(0,0)" fill="none" stroke="#005000" stroke-width="3.4" stroke-linejoin="miter"/><polyline points="2,5 6,10 10,6 14,10" transform="translate(0,0)" fill="none" stroke="#40D040" stroke-width="1.6"/></svg>
<div class="a" style="left:568px;top:146px;width:1px;height:20px;background:#ACA899"></div>
<div class="a" style="left:569px;top:146px;width:1px;height:20px;background:#fff"></div>
<svg class="a" style="left:574px;top:147px;opacity:1.0" width="16" height="16" viewBox="0 0 16 16"><path d="M1.5 1 V16" stroke="#000" stroke-width="1.1"/><polyline points="3,5 7,2 11,7 15,3" transform="translate(0,0)" fill="none" stroke="#005000" stroke-width="3.4" stroke-linejoin="miter"/><polyline points="3,5 7,2 11,7 15,3" transform="translate(0,0)" fill="none" stroke="#40D040" stroke-width="1.6"/><path d="M3 12 H10 M3 12 L6 9.5 M3 12 L6 14.5" stroke="#000" stroke-width="1.1" fill="none"/></svg>
<svg class="a" style="left:598px;top:147px;opacity:1.0" width="16" height="16" viewBox="0 0 16 16"><polyline points="1,5 5,1 10,6 14,2" transform="translate(0,0)" fill="none" stroke="#005000" stroke-width="3.4" stroke-linejoin="miter"/><polyline points="1,5 5,1 10,6 14,2" transform="translate(0,0)" fill="none" stroke="#40D040" stroke-width="1.6"/><path d="M4 12 H12 M4 12 L7 9.5 M4 12 L7 14.5" stroke="#000" stroke-width="1.1" fill="none"/></svg>
<svg class="a" style="left:621px;top:147px;opacity:1.0" width="16" height="16" viewBox="0 0 16 16"><polyline points="1,2 5,6 10,1 14,5" transform="translate(0,0)" fill="none" stroke="#005000" stroke-width="3.4" stroke-linejoin="miter"/><polyline points="1,2 5,6 10,1 14,5" transform="translate(0,0)" fill="none" stroke="#40D040" stroke-width="1.6"/><path d="M4 12 H12 M12 12 L9 9.5 M12 12 L9 14.5" stroke="#000" stroke-width="1.1" fill="none"/></svg>
<svg class="a" style="left:644px;top:147px;opacity:1.0" width="16" height="16" viewBox="0 0 16 16"><path d="M14.5 1 V16" stroke="#000" stroke-width="1.1"/><polyline points="1,2 5,6 9,1 13,5" transform="translate(0,0)" fill="none" stroke="#005000" stroke-width="3.4" stroke-linejoin="miter"/><polyline points="1,2 5,6 9,1 13,5" transform="translate(0,0)" fill="none" stroke="#40D040" stroke-width="1.6"/><path d="M5 12 H13 M13 12 L10 9.5 M13 12 L10 14.5" stroke="#000" stroke-width="1.1" fill="none"/></svg>
<div class="a" style="left:668px;top:146px;width:1px;height:20px;background:#ACA899"></div>
<div class="a" style="left:669px;top:146px;width:1px;height:20px;background:#fff"></div>
<svg class="a" style="left:675px;top:147px;opacity:1.0" width="16" height="16" viewBox="0 0 16 16"><circle cx="6" cy="6" r="3.5" fill="#C0F0F0" stroke="#000" stroke-width="1.2"/><path d="M3 9 L0.5 12" stroke="#000" stroke-width="2"/><path d="M13 1 H15 V15 H13" stroke="#000" stroke-width="1.1" fill="none"/><path d="M4 13 H9 M6.5 10.5 V15.5" stroke="#000" stroke-width="1"/></svg>
<svg class="a" style="left:698px;top:147px;opacity:1.0" width="16" height="16" viewBox="0 0 16 16"><circle cx="6" cy="6" r="3.5" fill="#C0F0F0" stroke="#000" stroke-width="1.2"/><path d="M3 9 L0.5 12" stroke="#000" stroke-width="2"/><path d="M13 1 H15 V15 H13" stroke="#000" stroke-width="1.1" fill="none"/><path d="M4 13 H9" stroke="#000" stroke-width="1"/></svg>
<svg class="a" style="left:721px;top:147px;opacity:1.0" width="16" height="16" viewBox="0 0 16 16"><path d="M1 3.5 H16 M1 14.5 H16" stroke="#000" stroke-width="1.1"/><polyline points="2,10 6,6 10,10 14,7" transform="translate(0,0)" fill="none" stroke="#005000" stroke-width="3.4" stroke-linejoin="miter"/><polyline points="2,10 6,6 10,10 14,7" transform="translate(0,0)" fill="none" stroke="#40D040" stroke-width="1.6"/></svg>
<div class="a" style="left:744px;top:146px;width:1px;height:20px;background:#ACA899"></div>
<div class="a" style="left:745px;top:146px;width:1px;height:20px;background:#fff"></div>
<svg class="a" style="left:752px;top:147px;opacity:1.0" width="16" height="16" viewBox="0 0 16 16"><path d="M1 1.5 H16 M1.5 1 V16 M14.5 1 V16 M2 1 V3 M5 1 V3 M8 1 V3 M11 1 V3" stroke="#000" stroke-width="1"/><circle cx="7" cy="7" r="3.5" fill="#C0F0F0" stroke="#000" stroke-width="1.2"/><path d="M4 10 L1 13" stroke="#000" stroke-width="2.2"/><path d="M9 11 Q15 9 13 15 M9 11 L11 9 M9 11 L11 13" stroke="#2050D0" stroke-width="1.6" fill="none"/></svg>
<div class="a" style="left:775px;top:146px;width:1px;height:20px;background:#ACA899"></div>
<div class="a" style="left:776px;top:146px;width:1px;height:20px;background:#fff"></div>
<svg class="a" style="left:783px;top:147px;opacity:1.0" width="16" height="16" viewBox="0 0 16 16"><polyline points="1,14 5,10 10,14 14,10" transform="translate(0,0)" fill="none" stroke="#005000" stroke-width="3.4" stroke-linejoin="miter"/><polyline points="1,14 5,10 10,14 14,10" transform="translate(0,0)" fill="none" stroke="#40D040" stroke-width="1.6"/><path d="M7 1 V11 M7 1 L4.5 4 M7 1 L9.5 4" stroke="#000" stroke-width="1.1" fill="none"/></svg>
<svg class="a" style="left:806px;top:147px;opacity:1.0" width="16" height="16" viewBox="0 0 16 16"><polyline points="1,4 5,1 10,5 14,1" transform="translate(0,0)" fill="none" stroke="#005000" stroke-width="3.4" stroke-linejoin="miter"/><polyline points="1,4 5,1 10,5 14,1" transform="translate(0,0)" fill="none" stroke="#40D040" stroke-width="1.6"/><path d="M7 4 V15 M7 15 L4.5 12 M7 15 L9.5 12" stroke="#000" stroke-width="1.1" fill="none"/></svg>
<div class="a" style="left:829px;top:146px;width:1px;height:20px;background:#ACA899"></div>
<div class="a" style="left:830px;top:146px;width:1px;height:20px;background:#fff"></div>
<svg class="a" style="left:837px;top:147px;opacity:1.0" width="16" height="16" viewBox="0 0 16 16"><path d="M7 1 V11 M2 6 H12" stroke="#000" stroke-width="3.4"/><path d="M7 1.5 V10.5 M2.5 6 H11.5" stroke="#F0F060" stroke-width="1.6"/><text x="9" y="16" font-family="Liberation Sans" font-size="7" text-anchor="middle" fill="#E03010">0.00</text></svg>
<svg class="a" style="left:859px;top:147px;opacity:1.0" width="16" height="16" viewBox="0 0 16 16"><path d="M1 8 H6 M10 8 H15" stroke="#004000" stroke-width="3"/><path d="M1 8 H6 M10 8 H15" stroke="#40D040" stroke-width="1.4"/><path d="M5 5 L11 11 M11 5 L5 11" stroke="#000" stroke-width="1.2"/></svg>
<div class="a" style="left:883px;top:146px;width:1px;height:20px;background:#ACA899"></div>
<div class="a" style="left:884px;top:146px;width:1px;height:20px;background:#fff"></div>
<svg class="a" style="left:891px;top:147px;opacity:1.0" width="16" height="16" viewBox="0 0 16 16"><polyline points="1,9 6,4 11,9 15,6" fill="none" stroke="#B0B0A8" stroke-width="2.2"/><path d="M4 12 H14 L12 14" stroke="#C0C0B8" stroke-width="1.4" fill="none"/></svg>
<svg class="a" style="left:914px;top:147px;opacity:1.0" width="16" height="16" viewBox="0 0 16 16"><path d="M1 2.5 H16 M1 14.5 H16" stroke="#E04020" stroke-width="1.2"/><polyline points="2,10 6,6 10,10 14,7" transform="translate(0,0)" fill="none" stroke="#005000" stroke-width="3.4" stroke-linejoin="miter"/><polyline points="2,10 6,6 10,10 14,7" transform="translate(0,0)" fill="none" stroke="#40D040" stroke-width="1.6"/></svg>
<svg class="a" style="left:937px;top:147px;opacity:1.0" width="16" height="16" viewBox="0 0 16 16"><path d="M3 1 V16 M1 13 H16" stroke="#2040C0" stroke-width="1.1"/><path d="M3 14 L5 4 L7 14" stroke="#20A020" fill="none" stroke-width="1"/><path d="M7 4 H15 M7 4 L9.5 2 M7 4 L9.5 6 M15 4 L12.5 2 M15 4 L12.5 6" stroke="#102080" stroke-width="1.2" fill="none"/></svg>
<div class="a" style="left:288px;top:206px;width:7px;height:580px;background:#808080"></div>
<div class="a" style="left:288px;top:493px;width:7px;height:13px;background:#00E000;border-left:1px solid #A0FFA0"></div>
<div class="a" style="left:347px;top:816px;width:1033px;height:7px;background:#808080"></div>
<div class="a" style="left:347px;top:816px;width:47px;height:7px;background:#00E000;border-left:1px solid #A0FFA0"></div>
<div class="a" style="left:1146px;top:174px;width:213px;height:55px;background:#0842D0;border-radius:3px 3px 0 0"></div>
<div class="a" style="left:1146px;top:174px;width:213px;height:22px;background:linear-gradient(#3D8CF5,#0D5FE8 4px,#0054E3 10px,#0062F5 20px)"></div>
<div class="t" style="left:1150px;top:181px;font-family:Liberation Serif,serif;font-weight:bold;font-size:12px;letter-spacing:0.3px;color:#fff;line-height:12px">Legend</div>
<div class="a" style="left:1340px;top:180px;width:14px;height:14px;border:1px solid #FFFFFF;border-radius:3px;background:linear-gradient(135deg,#F08A70 0%,#E3562E 45%,#D34A20 75%,#C2401A 100%)"><svg class="a" style="left:0;top:0" width="12" height="12" viewBox="0 0 19 19"><path d="M5 5 L14 14 M14 5 L5 14" stroke="#fff" stroke-width="2.2"/></svg></div>
<div class="a" style="left:1149px;top:197px;width:207px;height:29px;background:#ECE9D8"></div>
<div class="a" style="left:1184px;top:198px;width:157px;height:14px;background:#316AC5"></div>
<div class="a" style="left:1150px;top:196px;width:205px;height:1px;background:#fff"></div>
<div class="a" style="left:1152px;top:199px;width:12px;height:12px;background:#fff;border-style:solid;border-width:2px 0 0 2px;border-color:#404040"></div>
<svg class="a" style="left:1154px;top:201px;opacity:1.0" width="9" height="9" viewBox="0 0 9 9"><path d="M1 4 L3.5 7 L8 1" stroke="#000" stroke-width="1.8" fill="none"/></svg>
<div class="a" style="left:1152px;top:213px;width:12px;height:12px;background:#fff;border-style:solid;border-width:2px 0 0 2px;border-color:#404040"></div>
<svg class="a" style="left:1168px;top:198px;opacity:1.0" width="16" height="14" viewBox="0 0 16 14"><rect width="16" height="14" fill="#000"/><path d="M1 12 C2.5 3, 5 1, 6.5 5.5 L8.5 10.5 C10 14.5, 12.5 13, 15 5" fill="none" stroke="#40E040" stroke-width="1.2"/><path d="M0 13.5 H16" stroke="#3060C0"/></svg>
<svg class="a" style="left:1168px;top:212px;opacity:1.0" width="16" height="13" viewBox="0 0 16 13"><rect width="16" height="13" fill="#000"/><path d="M5 11 V2 M8 11 V8" stroke="#E04020" stroke-width="1"/><polyline points="1,11 3,10 5,11 7,10 9,11 11,10 13,11 15,10" fill="none" stroke="#E04020" stroke-width="1"/></svg>
<div class="t" style="left:1191px;top:200px;font-family:Liberation Mono,monospace;font-size:11px;letter-spacing:-0.6px;line-height:10px;color:#fff">A Live Scope Trace</div>
<div class="t" style="left:1191px;top:214px;font-family:Liberation Mono,monospace;font-size:11px;letter-spacing:-0.6px;line-height:10px;color:#000">A Live FFT Trace</div>
<svg class="a" style="left:1342px;top:199px;opacity:1.0" width="14" height="14" viewBox="0 0 14 14"><g shape-rendering="crispEdges"><path d="M0.5 0.5 H6.5 L7.5 1.5 V8.5 H0.5 Z" fill="#fff" stroke="#000" stroke-width="1"/><path d="M2 3.5 H6 M2 5.5 H5" stroke="#000" stroke-width="1"/><path d="M5.5 4.5 H11.5 L12.5 5.5 V12.5 H5.5 Z" fill="#fff" stroke="#000" stroke-width="1"/><path d="M7 7.5 H11 M7 9.5 H11" stroke="#000" stroke-width="1"/><path d="M5 13 H13 V5.5" stroke="#000" stroke-width="1" fill="none"/></g></svg>
<svg class="a" style="left:1342px;top:213px;opacity:1.0" width="14" height="13" viewBox="0 0 14 13"><g shape-rendering="crispEdges"><path d="M0.5 0.5 H6.5 L7.5 1.5 V8.5 H0.5 Z" fill="none" stroke="#A0A098" stroke-width="1"/><path d="M2 3.5 H6 M2 5.5 H5" stroke="#A0A098" stroke-width="1"/><path d="M5.5 4.5 H11.5 L12.5 5.5 V11.5 H5.5 Z" fill="#ECE9D8" stroke="#A0A098" stroke-width="1"/><path d="M7 7.5 H11 M7 9.5 H11" stroke="#A0A098" stroke-width="1"/></g></svg>
<div class="a" style="left:5px;top:107px;width:267px;height:229px;background:#7D92DE;border-radius:7px 7px 0 0;box-shadow:inset 1px 0 0 #6A7CD2,inset -1px 0 0 #6A7CD2,inset 0 -1px 0 #6474CC;"></div>
<div class="a" style="left:5px;top:107px;width:267px;height:30px;background:linear-gradient(#A4BDEE 0px,#95B1EA 1px,#7E9CE3 3px,#7A96DF 8px,#7B98E0 16px,#82A0E4 22px,#8CAAE8 27px,#7E9BE0 30px);border-radius:7px 7px 0 0"></div>
<div class="a" style="left:9px;top:137px;width:260px;height:196px;background:#ECE9D8;border-top:1px solid #716F64;border-left:1px solid #716F64;border-bottom:1px solid #fff;border-right:1px solid #fff"></div>
<svg class="a" style="left:10px;top:116px" width="16" height="14" viewBox="0 0 16 14"><path d="M6 1 L1 12 L12 12 Z" fill="#fff" stroke="#000" stroke-width="1"/><path d="M7 5 L14 11" stroke="#8050B0" stroke-width="2"/></svg>
<div class="t" style="left:30px;top:118px;font-family:Liberation Mono,monospace;font-weight:bold;font-size:13.2px;letter-spacing:0;color:#DCE6FA;line-height:14px">Signal Generator ...</div>
<div class="a" style="left:200px;top:113px;width:20px;height:21px;border:1px solid #B0C6F6;border-radius:3px;background:linear-gradient(135deg,#88A8F2 0%,#5B80E6 50%,#4670DE 100%)"><div class="a" style="left:5px;top:13px;width:7px;height:3px;background:#fff"></div></div>
<div class="a" style="left:223px;top:113px;width:20px;height:21px;border:1px solid #90ACEC;border-radius:3px;background:linear-gradient(135deg,#7D9BE6,#6A88DC)"><div class="a" style="left:5px;top:4px;width:10px;height:10px;border:1px solid #A8BEF2;border-top-width:3px"></div></div>
<div class="a" style="left:246px;top:113px;width:21px;height:21px;border:1px solid #D8B8C8;border-radius:3px;background:linear-gradient(135deg,#CF98A6,#B8707E)"><svg class="a" style="left:0;top:0" width="19" height="19" viewBox="0 0 19 19"><path d="M5 5 L14 14 M14 5 L5 14" stroke="#fff" stroke-width="2.2"/></svg></div>
<div class="a" style="left:16px;top:146px;width:246px;height:180px;border:1px solid #ACA899;box-shadow:inset 1px 1px 0 #fff,1px 1px 0 #fff"></div>
<div class="a" style="left:26px;top:140px;width:72px;height:12px;background:#ECE9D8"></div>
<div class="t" style="left:28px;top:140px;">Both channels</div>
<div class="a" style="left:22px;top:157px;width:74px;height:19px;background:repeating-conic-gradient(#F6F5EF 0 25%,#E8E6DA 0 50%) 0 0/2px 2px;border-style:solid;border-width:1px;border-color:#ACA899 #fff #fff #ACA899;box-shadow:inset 1px 1px 0 #716F64"></div>
<div class="t" style="left:52px;top:161px;">On</div>
<div class="a" style="left:106px;top:162px;width:12px;height:12px;background:#fff;border-style:solid;border-width:1px;border-color:#716F64 #fff #fff #716F64;box-shadow:inset 1px 1px 0 #ACA899,inset -1px -1px 0 #F1EFE2"></div>
<div class="t" style="left:124px;top:162px;">Phase-invert</div>
<div class="btn" style="left:205px;top:157px;width:53px;height:20px"></div>
<div class="t" style="left:211px;top:161px;color:#ACA899">Copy &gt;&gt;</div>
<div class="t" style="left:21px;top:186px;">Function</div>
<div class="sunk" style="left:97px;top:181px;width:159px;height:20px;background:#fff"></div>
<div class="t" style="left:100px;top:185px;color:#000">Sine</div>
<div class="rais" style="left:238px;top:183px;width:16px;height:16px"></div>
<svg class="a" style="left:242px;top:189px" width="8" height="5"><path d="M0 0 L8 0 L4 4 Z" fill="#000"/></svg>
<div class="t" style="left:21px;top:208px;">Amplitude</div>
<div class="sunk" style="left:97px;top:204px;width:64px;height:20px;background:#fff"></div>
<div class="t" style="left:100px;top:208px;">2.0000</div>
<div class="sunk" style="left:167px;top:204px;width:89px;height:20px;background:#fff"></div>
<div class="t" style="left:170px;top:208px;color:#000">V (RMS)</div>
<div class="rais" style="left:238px;top:206px;width:16px;height:16px"></div>
<svg class="a" style="left:242px;top:212px" width="8" height="5"><path d="M0 0 L8 0 L4 4 Z" fill="#000"/></svg>
<div class="a" style="left:17px;top:228px;width:245px;height:1px;background:#ACA899"></div>
<div class="a" style="left:17px;top:229px;width:245px;height:1px;background:#fff"></div>
<div class="t" style="left:21px;top:239px;">Frequency</div>
<div class="sunk" style="left:97px;top:235px;width:64px;height:20px;background:#fff"></div>
<div class="t" style="left:100px;top:239px;">1000.000</div>
<div class="sunk" style="left:167px;top:235px;width:89px;height:20px;background:#fff"></div>
<div class="t" style="left:170px;top:239px;color:#000">Hz</div>
<div class="rais" style="left:238px;top:237px;width:16px;height:16px"></div>
<svg class="a" style="left:242px;top:243px" width="8" height="5"><path d="M0 0 L8 0 L4 4 Z" fill="#000"/></svg>
<div class="a" style="left:0px;top:345px;width:297px;height:148px;background:#7D92DE;border-radius:7px 7px 0 0;box-shadow:inset 1px 0 0 #6A7CD2,inset -1px 0 0 #6A7CD2,inset 0 -1px 0 #6474CC;"></div>
<div class="a" style="left:0px;top:345px;width:297px;height:30px;background:linear-gradient(#A4BDEE 0px,#95B1EA 1px,#7E9CE3 3px,#7A96DF 8px,#7B98E0 16px,#82A0E4 22px,#8CAAE8 27px,#7E9BE0 30px);border-radius:7px 7px 0 0"></div>
<div class="a" style="left:3px;top:375px;width:290px;height:114px;background:#ECE9D8;border-top:1px solid #716F64;border-left:1px solid #716F64;border-bottom:1px solid #fff;border-right:1px solid #fff"></div>
<svg class="a" style="left:4px;top:354px" width="16" height="14" viewBox="0 0 16 14"><path d="M6 1 L1 12 L12 12 Z" fill="#fff" stroke="#000" stroke-width="1"/><path d="M7 5 L14 11" stroke="#8050B0" stroke-width="2"/></svg>
<div class="t" style="left:25px;top:356px;font-family:Liberation Mono,monospace;font-weight:bold;font-size:13.2px;letter-spacing:0;color:#DCE6FA;line-height:14px">Signal Analyzer Detec...</div>
<div class="a" style="left:225px;top:351px;width:19px;height:20px;border:1px solid #B0C6F6;border-radius:3px;background:linear-gradient(135deg,#88A8F2 0%,#5B80E6 50%,#4670DE 100%)"><div class="a" style="left:5px;top:13px;width:6px;height:3px;background:#fff"></div></div>
<div class="a" style="left:248px;top:351px;width:19px;height:20px;border:1px solid #90ACEC;border-radius:3px;background:linear-gradient(135deg,#7D9BE6,#6A88DC)"><div class="a" style="left:5px;top:4px;width:10px;height:10px;border:1px solid #A8BEF2;border-top-width:3px"></div></div>
<div class="a" style="left:271px;top:351px;width:19px;height:20px;border:1px solid #D8B8C8;border-radius:3px;background:linear-gradient(135deg,#CF98A6,#B8707E)"><svg class="a" style="left:0;top:0" width="17" height="18" viewBox="0 0 19 19"><path d="M5 5 L14 14 M14 5 L5 14" stroke="#fff" stroke-width="2.2"/></svg></div>
<div class="t" style="left:91px;top:381px;">Channel A</div>
<div class="t" style="left:156px;top:381px;">Channel B</div>
<div class="t" style="left:9px;top:401px;">RMS amplitude</div>
<div class="a" style="left:87px;top:397px;width:60px;height:19px;background:#000;border-style:solid;border-width:2px;border-color:#ACA899 #fff #fff #ACA899;box-shadow:inset 1px 1px 0 #716F64"></div>
<div class="t" style="left:87px;top:401px;width:58px;text-align:right;color:#40D0D0">6.8597</div>
<div class="a" style="left:151px;top:397px;width:59px;height:19px;background:#000;border-style:solid;border-width:2px;border-color:#ACA899 #fff #fff #ACA899;box-shadow:inset 1px 1px 0 #716F64"></div>
<div class="t" style="left:151px;top:401px;width:57px;text-align:right;color:#40D0D0">5.10u</div>
<div class="sunk" style="left:216px;top:398px;width:69px;height:19px;background:#fff"></div>
<div class="t" style="left:219px;top:402px;color:#000">V</div>
<div class="rais" style="left:267px;top:400px;width:16px;height:15px"></div>
<svg class="a" style="left:271px;top:405px" width="8" height="5"><path d="M0 0 L8 0 L4 4 Z" fill="#000"/></svg>
<div class="t" style="left:9px;top:425px;">Frequency</div>
<div class="a" style="left:87px;top:421px;width:60px;height:19px;background:#000;border-style:solid;border-width:2px;border-color:#ACA899 #fff #fff #ACA899;box-shadow:inset 1px 1px 0 #716F64"></div>
<div class="t" style="left:87px;top:425px;width:58px;text-align:right;color:#40D0D0">999.999</div>
<div class="sunk" style="left:151px;top:422px;width:59px;height:19px;background:#ECE9D8"></div>
<div class="sunk" style="left:216px;top:422px;width:69px;height:19px;background:#fff"></div>
<div class="t" style="left:219px;top:426px;color:#000">Hz</div>
<div class="rais" style="left:267px;top:424px;width:16px;height:15px"></div>
<svg class="a" style="left:271px;top:429px" width="8" height="5"><path d="M0 0 L8 0 L4 4 Z" fill="#000"/></svg>
<div class="t" style="left:9px;top:450px;">Inter-channel phase</div>
<div class="sunk" style="left:151px;top:445px;width:59px;height:19px;background:#ECE9D8"></div>
<div class="sunk" style="left:216px;top:445px;width:69px;height:19px;background:#ECE9D8"></div>
<div class="t" style="left:219px;top:449px;color:#ACA899">degrees</div>
<div class="rais" style="left:267px;top:447px;width:16px;height:15px"></div>
<svg class="a" style="left:271px;top:452px" width="8" height="5"><path d="M0 0 L8 0 L4 4 Z" fill="#ACA899"/></svg>
<div class="a" style="left:8px;top:495px;width:257px;height:262px;background:#A9BBA2;border-radius:7px 7px 0 0;"></div>
<div class="a" style="left:8px;top:495px;width:257px;height:30px;background:linear-gradient(#CDDAC6 0px,#BCCDB5 2px,#B0C4A8 6px,#ADC1A5 16px,#B2C5AA 25px,#A6B99F 30px);border-radius:7px 7px 0 0"></div>
<div class="a" style="left:11px;top:525px;width:251px;height:228px;background:#ECE9D8;border-bottom:1px solid #fff"></div>
<svg class="a" style="left:13px;top:504px" width="16" height="14" viewBox="0 0 16 14"><path d="M6 1 L1 12 L12 12 Z" fill="#fff" stroke="#000" stroke-width="1"/><path d="M7 5 L14 11" stroke="#8050B0" stroke-width="2"/></svg>
<div class="t" style="left:32px;top:505px;font-family:Liberation Sans,sans-serif;font-weight:bold;font-size:13.6px;letter-spacing:0;color:#F4F8F0;line-height:14px">CT Reading</div>
<div class="a" style="left:194px;top:502px;width:19px;height:19px;border:1px solid #B0C6F6;border-radius:3px;background:linear-gradient(135deg,#88A8F2 0%,#5B80E6 50%,#4670DE 100%)"><div class="a" style="left:5px;top:13px;width:6px;height:3px;background:#fff"></div></div>
<div class="a" style="left:217px;top:502px;width:19px;height:19px;border:1px solid #B0C6F6;border-radius:3px;background:linear-gradient(135deg,#88A8F2 0%,#5B80E6 50%,#4670DE 100%)"><div class="a" style="left:5px;top:4px;width:10px;height:10px;border:1px solid #fff;border-top-width:3px"></div></div>
<div class="a" style="left:240px;top:502px;width:19px;height:19px;border:1px solid #D8B8C8;border-radius:3px;background:linear-gradient(135deg,#CF98A6,#B8707E)"><svg class="a" style="left:0;top:0" width="17" height="17" viewBox="0 0 19 19"><path d="M5 5 L14 14 M14 5 L5 14" stroke="#fff" stroke-width="2.2"/></svg></div>
<div class="t" style="left:14px;top:529px;">THD+N - relative (Channel A RMS)</div>
<div class="a" style="left:11px;top:543px;width:225px;height:209px;background:#000;border-top:1px solid #716F64;border-left:1px solid #716F64;border-right:1px solid #fff"></div>
<div class="t" style="left:33px;top:628px;font-size:37.5px;line-height:40px;letter-spacing:0;color:#1CE8F0">0.00036 %</div>
<div class="btn" style="left:238px;top:546px;width:22px;height:20px;background:#D8D6CC"></div>
<div class="btn" style="left:238px;top:567px;width:22px;height:20px;background:#D8D6CC"></div>
<div class="btn" style="left:238px;top:588px;width:22px;height:20px;background:#D8D6CC"></div>
<div class="btn" style="left:238px;top:609px;width:22px;height:20px;background:#D8D6CC"></div>
<svg class="a" style="left:241px;top:549px;opacity:1.0" width="16" height="14" viewBox="0 0 16 14"><rect x="0" y="1" width="16" height="11" fill="#000"/><text x="8" y="9" font-family="Liberation Sans" font-size="8" text-anchor="middle" fill="#40E0F0">1.00</text><path d="M2 11 H11" stroke="#40E0F0" stroke-width="1"/></svg>
<svg class="a" style="left:241px;top:570px;opacity:1.0" width="16" height="14" viewBox="0 0 16 14"><circle cx="6" cy="6" r="4.5" fill="#fff" stroke="#000" stroke-width="1.2"/><circle cx="6" cy="6" r="1.6" fill="#E04020"/><circle cx="13" cy="8" r="1.6" fill="#E04020"/><path d="M4 11 Q8 15 13 9" stroke="#000" stroke-width="1.3" fill="none"/></svg>
<svg class="a" style="left:241px;top:590px;opacity:1.0" width="16" height="15" viewBox="0 0 16 15"><rect x="1" y="5" width="11" height="9" fill="#fff" stroke="#A02020" stroke-width="1"/><rect x="1" y="5" width="11" height="2.5" fill="#203080"/><path d="M3 10 H10 M3 12 H10 M5 7 V14 M8 7 V14" stroke="#404040" stroke-width="0.7"/><path d="M9 9 L15 1" stroke="#000" stroke-width="2.4"/><path d="M9 9 L15 1" stroke="#F0D040" stroke-width="1.2"/></svg>
<svg class="a" style="left:241px;top:612px;opacity:1.0" width="16" height="14" viewBox="0 0 16 14"><path d="M1 7 L5 4 V10 Z M15 7 L11 4 V10 Z" fill="#A8A89C"/><path d="M5 7 H7 M9 7 H11" stroke="#A8A89C" stroke-width="1.5"/></svg>
<div class="a" style="left:0px;top:849px;width:1434px;height:22px;background:#ECE9D8"></div>
<div class="a" style="left:0px;top:849px;width:1434px;height:1px;background:#FFFFFF"></div>
<div class="t" style="left:-1px;top:855px;font-family:Liberation Mono,monospace;font-size:11px;letter-spacing:-0.6px;line-height:12px">For Help, press F1</div>
<div class="a" style="left:0px;top:869px;width:1434px;height:2px;background:#2F5FC8"></div>
<div class="a" style="left:0px;top:869px;width:88px;height:2px;background:#3C9A3C"></div>
<div class="a" style="left:841px;top:853px;width:17px;height:16px;background:#ECE9D8;border-style:solid;border-width:1px;border-color:#ACA899 #fff #fff #ACA899"></div>
<svg class="a" style="left:843px;top:855px;opacity:1.0" width="14" height="13" viewBox="0 0 14 13"><path d="M1 8 Q7 0 13 8 Z" fill="#fff" stroke="#000" stroke-width="1"/><path d="M7 7 L10 3" stroke="#E04020"/><path d="M1 11 H12 M12 11 L9 9 M12 11 L9 13" stroke="#000" stroke-width="1.2" fill="none"/></svg>
<div class="a" style="left:861px;top:853px;width:16px;height:16px;background:#ECE9D8;border-style:solid;border-width:1px;border-color:#ACA899 #fff #fff #ACA899"></div>
<svg class="a" style="left:862px;top:855px;opacity:1.0" width="14" height="13" viewBox="0 0 14 13"><rect x="1" y="0" width="12" height="7" fill="#fff" stroke="#000" stroke-width="1"/><text x="7" y="6" font-family="Liberation Sans" font-size="6" text-anchor="middle">1.00</text><path d="M1 10 H12 M12 10 L9 8 M12 10 L9 12" stroke="#000" stroke-width="1.2" fill="none"/></svg>
<div class="a" style="left:880px;top:853px;width:36px;height:16px;background:#ECE9D8;border-style:solid;border-width:1px;border-color:#ACA899 #fff #fff #ACA899"></div>
<div class="t" style="left:880px;top:855px;width:36px;text-align:center;color:#ACA899;">SC out</div>
<div class="a" style="left:918px;top:853px;width:14px;height:16px;background:#ECE9D8;border-style:solid;border-width:1px;border-color:#ACA899 #fff #fff #ACA899"></div>
<svg class="a" style="left:920px;top:857px;opacity:1.0" width="10" height="10" viewBox="0 0 10 10"><path d="M1 4 H6 V1 L10 5 L6 9 V6 H1 Z" fill="#000"/></svg>
<div class="a" style="left:935px;top:853px;width:54px;height:16px;background:#ECE9D8;border-style:solid;border-width:1px;border-color:#ACA899 #fff #fff #ACA899"></div>
<div class="t" style="left:935px;top:855px;width:54px;text-align:center;color:#000;">Bal/unbal</div>
<div class="a" style="left:991px;top:853px;width:50px;height:16px;background:#FF2000;border-style:solid;border-width:1px;border-color:#ACA899 #fff #fff #ACA899"></div>
<div class="t" style="left:991px;top:855px;width:50px;text-align:center;color:#600000;">BNC</div>
<div class="a" style="left:1044px;top:853px;width:29px;height:16px;background:#ECE9D8;border-style:solid;border-width:1px;border-color:#ACA899 #fff #fff #ACA899"></div>
<div class="t" style="left:1044px;top:855px;width:29px;text-align:center;color:#ACA899;">SC in</div>
<div class="a" style="left:1075px;top:853px;width:16px;height:16px;background:#FF2000;border-style:solid;border-width:1px;border-color:#ACA899 #fff #fff #ACA899"></div>
<div class="t" style="left:1075px;top:855px;width:16px;text-align:center;color:#600000;">CS</div>
<div class="a" style="left:1094px;top:853px;width:55px;height:16px;background:#FF2000;border-style:solid;border-width:1px;border-color:#ACA899 #fff #fff #ACA899"></div>
<div class="a" style="left:1152px;top:853px;width:56px;height:16px;background:#ECE9D8;border-style:solid;border-width:1px;border-color:#ACA899 #fff #fff #ACA899"></div>
<div class="a" style="left:1211px;top:854px;width:43px;height:14px;border:1px solid #000;border-top:0;border-radius:0 0 3px 3px;background:#ECE9D8"></div>
<div class="t" style="left:1211px;top:855px;width:43px;text-align:center;font-size:12px;font-weight:bold;color:#000;letter-spacing:0">Page 1</div>
<div class="a" style="left:1255px;top:854px;width:42px;height:14px;border:1px solid #000;border-top:2px solid #000;border-radius:0 0 3px 3px;background:#ECE9D8"></div>
<div class="t" style="left:1255px;top:855px;width:42px;text-align:center;font-size:12px;font-weight:bold;color:#000;letter-spacing:0">Page 2</div>
<div class="a" style="left:1298px;top:854px;width:43px;height:14px;border:1px solid #000;border-top:2px solid #000;border-radius:0 0 3px 3px;background:#ECE9D8"></div>
<div class="t" style="left:1298px;top:855px;width:43px;text-align:center;font-size:12px;font-weight:bold;color:#000;letter-spacing:0">Page 3</div>
<div class="a" style="left:1342px;top:854px;width:44px;height:14px;border:1px solid #000;border-top:2px solid #000;border-radius:0 0 3px 3px;background:#ECE9D8"></div>
<div class="t" style="left:1342px;top:855px;width:44px;text-align:center;font-size:12px;font-weight:bold;color:#000;letter-spacing:0">Page 4</div>
<div class="a" style="left:1387px;top:854px;width:43px;height:14px;border:1px solid #000;border-top:2px solid #000;border-radius:0 0 3px 3px;background:#ECE9D8"></div>
<div class="t" style="left:1387px;top:855px;width:43px;text-align:center;font-size:12px;color:#404040;letter-spacing:0">Page 5</div>
<div class="t" style="left:1354px;top:849px;font-family:Liberation Mono,monospace;font-size:11px;letter-spacing:-0.8px;line-height:10px;color:#000;text-shadow:0 0 1px #fff,1px 0 0 #fff,-1px 0 0 #fff">hifi168.com</div>
</div></body></html>
